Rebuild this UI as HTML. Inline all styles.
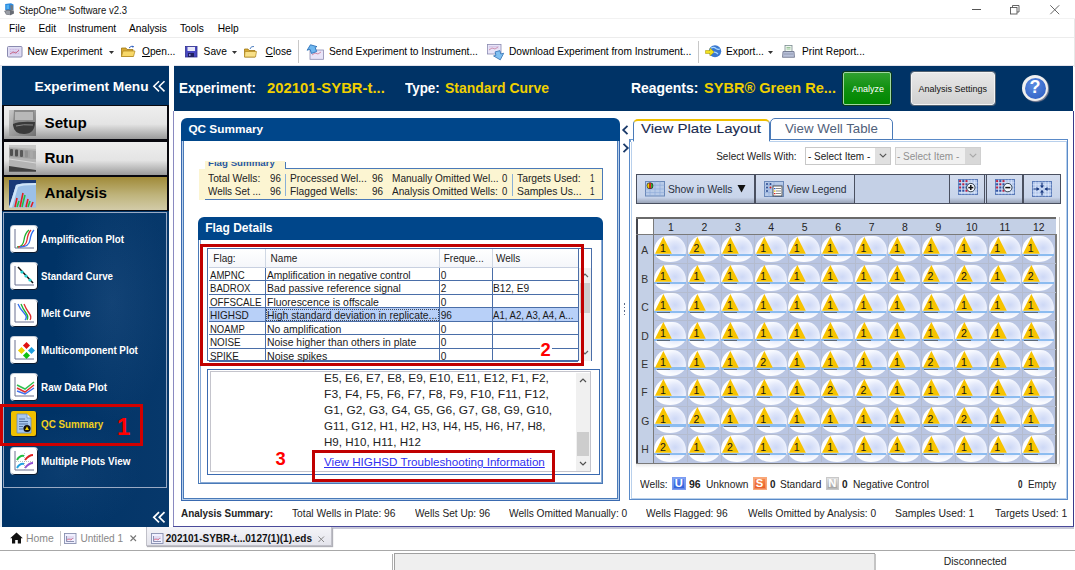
<!DOCTYPE html><html><head><meta charset="utf-8"><style>
*{margin:0;padding:0;box-sizing:border-box}
html,body{width:1075px;height:570px;overflow:hidden;background:#fff;font-family:"Liberation Sans",sans-serif;color:#000}
.abs{position:absolute}
.t{position:absolute;white-space:pre;line-height:1}
svg{position:absolute;overflow:visible}
.ib{position:absolute;width:26px;height:26px;background:#fff;border-radius:3px;box-shadow:1px 1px 0 #0a1a30, 0 0 0 1px #c8d0dc}
</style></head><body>
<svg style="left:4px;top:3px;" width="10.5" height="12.5" viewBox="0 0 10.5 12.5"><path d="M1.2 1 L7 0.2 L9.5 1.5 L9.5 7 L1.2 7Z" fill="#2a8ae0"/><path d="M2.5 2 L5 1.8 L5 6 L2.5 6Z" fill="#50b0f0"/><path d="M6.5 2 L9 2.5 L9 7 L6.5 7Z" fill="#707880"/><path d="M0.2 8 L4 6.5 L9.8 7.5 L10 10.5 L6.5 12.3 L2 11.5 Z" fill="#686c74"/><path d="M1 8.5 L4 7.5 L6 8 L6 12 L2.5 11Z" fill="#9a9ea6"/></svg>
<div class="t" style="left:19.2px;top:4.9px;font-size:10.6px;color:#111;font-weight:normal;transform:scaleX(0.8985);transform-origin:0 0;">StepOne™ Software v2.3</div>
<div class="abs" style="left:0px;top:18px;width:1075px;height:1px;background:#f2f2f2"></div>
<div class="abs" style="left:972px;top:9px;width:9px;height:1px;background:#555"></div>
<svg style="left:1010px;top:5px;" width="10" height="10" viewBox="0 0 10 10"><rect x="0.5" y="2.5" width="6.5" height="6.5" fill="none" stroke="#555" stroke-width="0.9"/><path d="M2.5 2.5 V0.5 H9 V7 H7" fill="none" stroke="#555" stroke-width="0.9"/></svg>
<svg style="left:1050px;top:5px;" width="9.5" height="9.5" viewBox="0 0 9.5 9.5"><path d="M0.3 0.3 L9.2 9.2 M9.2 0.3 L0.3 9.2" stroke="#555" stroke-width="0.9"/></svg>
<div class="t" style="left:9px;top:23.8px;font-size:10.2px;color:#000;font-weight:normal;">File</div>
<div class="t" style="left:38.5px;top:23.8px;font-size:10.2px;color:#000;font-weight:normal;">Edit</div>
<div class="t" style="left:68px;top:23.8px;font-size:10.2px;color:#000;font-weight:normal;">Instrument</div>
<div class="t" style="left:129px;top:23.8px;font-size:10.2px;color:#000;font-weight:normal;">Analysis</div>
<div class="t" style="left:180px;top:23.8px;font-size:10.2px;color:#000;font-weight:normal;">Tools</div>
<div class="t" style="left:217.7px;top:23.8px;font-size:10.2px;color:#000;font-weight:normal;">Help</div>
<div class="abs" style="left:0px;top:37px;width:1075px;height:1px;background:#ececec"></div>
<div class="t" style="left:27.6px;top:46.5px;font-size:10.2px;color:#000;font-weight:normal;">New Experiment</div>
<div class="t" style="left:142px;top:46.5px;font-size:10.2px;color:#000;font-weight:normal;"><u>O</u>pen...</div>
<div class="t" style="left:203.6px;top:46.5px;font-size:10.2px;color:#000;font-weight:normal;">Save</div>
<div class="t" style="left:265.6px;top:46.5px;font-size:10.2px;color:#000;font-weight:normal;"><u>C</u>lose</div>
<div class="t" style="left:329px;top:46.5px;font-size:10.2px;color:#000;font-weight:normal;">Send Experiment to Instrument...</div>
<div class="t" style="left:509px;top:46.5px;font-size:10.2px;color:#000;font-weight:normal;">Download Experiment from Instrument...</div>
<div class="t" style="left:726px;top:46.5px;font-size:10.2px;color:#000;font-weight:normal;">Export...</div>
<div class="t" style="left:802px;top:46.5px;font-size:10.2px;color:#000;font-weight:normal;">Print Report...</div>
<svg style="left:6.5px;top:46px;" width="15.5" height="11.5" viewBox="0 0 15.5 11.5"><rect x="0.5" y="0.5" width="14.5" height="10.5" rx="1" fill="#e0e0f4" stroke="#8a8ab0" stroke-width="1"/><rect x="2" y="2" width="11.5" height="7.5" fill="#dcd4f0"/><path d="M3 3.5 H12 M3 5.5H12 M3 7.5H12" stroke="#c0a8d8" stroke-width="0.6" stroke-dasharray="1 0.6"/><path d="M3 8 L6 6 L9 7 L12 4" stroke="#c04060" stroke-width="0.7" fill="none"/></svg>
<svg style="left:108.5px;top:50.5px;" width="5" height="3" viewBox="0 0 5 3"><path d="M0 0 H5 L2.5 3Z" fill="#333"/></svg>
<svg style="left:121px;top:44.5px;" width="14.5" height="12" viewBox="0 0 14.5 12"><path d="M0.5 3 H5 L6 4.5 H12 V11.5 H0.5Z" fill="#d8a830" stroke="#a07818" stroke-width="0.8"/><path d="M2 6 H14 L12.5 11.5 H0.5Z" fill="#f8d868" stroke="#b08820" stroke-width="0.7"/><path d="M8 3 Q10 0.5 12.5 1.5" stroke="#3060c0" stroke-width="1" fill="none"/><path d="M11.5 0.5 L13 1.7 L11.5 3" fill="#3060c0"/></svg>
<svg style="left:184.8px;top:45.8px;" width="12.5" height="11.5" viewBox="0 0 12.5 11.5"><rect x="0.5" y="0.5" width="11.5" height="10.5" fill="#4848c0" stroke="#303090" stroke-width="0.8"/><rect x="2.5" y="1" width="7.5" height="4" fill="#e8e8f8"/><rect x="3" y="7" width="6" height="4" fill="#202060"/><rect x="4" y="8" width="1.5" height="2" fill="#8888d0"/></svg>
<svg style="left:231.5px;top:50.5px;" width="5" height="3" viewBox="0 0 5 3"><path d="M0 0 H5 L2.5 3Z" fill="#333"/></svg>
<svg style="left:244px;top:44.5px;" width="13.5" height="12.5" viewBox="0 0 13.5 12.5"><path d="M0.5 4 H4 L5 5.5 H11 V12 H0.5Z" fill="#d8a830" stroke="#a07818" stroke-width="0.8"/><path d="M1 6.5 H12.5 L11.5 12 H0.5Z" fill="#f8e088" stroke="#b08820" stroke-width="0.7"/><path d="M6 4 Q7 0.8 10 1.5" stroke="#5080c0" stroke-width="1" fill="none"/></svg>
<div class="abs" style="left:298.3px;top:40px;width:1.2px;height:22.5px;background:#c8c8c8"></div>
<svg style="left:306px;top:43.6px;" width="18" height="15.8" viewBox="0 0 18 15.8"><rect x="4" y="6" width="13.5" height="9.3" fill="#e8e4f8" stroke="#8a8ab0" stroke-width="0.8"/><path d="M6 11 L9 9 L12 10 L15 8" stroke="#c05070" stroke-width="0.6" fill="none"/><path d="M6 0.5 L11.5 4.5 L9.5 4.5 L9.5 9 L4 9 L4 4.5 L1 4.5Z" transform="rotate(-20 6 5)" fill="#70b8f0" stroke="#2a70b8" stroke-width="0.8"/></svg>
<svg style="left:487px;top:43.5px;" width="18" height="16.5" viewBox="0 0 18 16.5"><rect x="0.5" y="0.5" width="13.5" height="9.5" fill="#e8e4f8" stroke="#8a8ab0" stroke-width="0.8"/><path d="M2 6 L5 4 L8 5 L11 3" stroke="#c05070" stroke-width="0.6" fill="none"/><path d="M2 2.5H12 M2 4H12" stroke="#c8b0d8" stroke-width="0.5"/><path d="M9 7 H14 V10.5 H17 L12 16 L6.5 10.5 H9Z" transform="rotate(-15 12 11)" fill="#80c0f0" stroke="#3a78b8" stroke-width="0.8"/></svg>
<div class="abs" style="left:698px;top:40.6px;width:1.2px;height:22px;background:#c8c8c8"></div>
<svg style="left:705px;top:45px;" width="16.5" height="12.5" viewBox="0 0 16.5 12.5"><ellipse cx="10" cy="6.2" rx="6.2" ry="6" fill="#3a78d0"/><path d="M6 3 Q9 1.5 11 3.5 Q13 5 15 4 M7 8 Q10 6 13 9" stroke="#a8d8ff" stroke-width="1.2" fill="none"/><path d="M0.5 5.5 H5 V3 L9 7 L5 11 V8.5 H0.5Z" fill="#f0e020" stroke="#b0a010" stroke-width="0.6"/></svg>
<svg style="left:767.5px;top:50.5px;" width="5" height="3" viewBox="0 0 5 3"><path d="M0 0 H5 L2.5 3Z" fill="#333"/></svg>
<svg style="left:781.5px;top:44.5px;" width="13" height="13" viewBox="0 0 13 13"><rect x="3" y="0.5" width="7" height="6" fill="#f0f8f0" stroke="#7a8a90" stroke-width="0.8"/><path d="M4.5 2.5H8.5 M4.5 4H8.5" stroke="#60a060" stroke-width="0.6"/><path d="M1 6.5 H12 L12.5 12.3 H0.5Z" fill="#b8c0d8" stroke="#6a7088" stroke-width="0.8"/><path d="M2 9H11" stroke="#8890a8" stroke-width="0.8"/></svg>
<div class="abs" style="left:0px;top:64.5px;width:169px;height:1px;background:#e4e4ec"></div>
<div class="abs" style="left:173.5px;top:64.5px;width:901px;height:1px;background:#e4e4ec"></div>
<div class="abs" style="left:1073.5px;top:19px;width:1.5px;height:48px;background:#e8e8e8"></div>
<div class="abs" style="left:0px;top:66px;width:2px;height:461px;background:#e8eef4"></div>
<div class="abs" style="left:2px;top:66px;width:167px;height:461px;background:#003366"></div>
<div class="abs" style="left:2px;top:105px;width:167px;height:106px;background:#08080e"></div>
<div class="abs" style="left:2px;top:212px;width:167px;height:315px;background:linear-gradient(90deg,rgba(0,0,0,0) 30%,rgba(40,80,130,0.18)),radial-gradient(ellipse 60px 120px at 110px 90px,rgba(90,130,180,0.18),rgba(0,0,0,0)),radial-gradient(ellipse 80px 60px at 60px 260px,rgba(90,130,180,0.12),rgba(0,0,0,0))"></div>
<div class="t" style="left:34.5px;top:79.5px;font-size:13.7px;color:#fff;font-weight:bold;">Experiment Menu</div>
<svg style="left:152px;top:80px;" width="14" height="13" viewBox="0 0 14 13"><path d="M7 1.2 L1.8 6.3 L7 11.4 M12.5 1.2 L7.3 6.3 L12.5 11.4" stroke="#fff" stroke-width="1.5" fill="none"/></svg>
<div class="abs" style="left:4px;top:106px;width:163px;height:33px;background:linear-gradient(#eeeeee,#e4e4e4 55%,#9a9a9a)"></div>
<div class="t" style="left:44.5px;top:114.7px;font-size:15.2px;color:#000;font-weight:bold;">Setup</div>
<div class="abs" style="left:4px;top:141.5px;width:163px;height:33px;background:linear-gradient(#eeeeee,#e4e4e4 55%,#9a9a9a)"></div>
<div class="t" style="left:44.5px;top:150.2px;font-size:15.2px;color:#000;font-weight:bold;">Run</div>
<div class="abs" style="left:4px;top:176.5px;width:163px;height:33px;background:linear-gradient(#a08a38,#bfb47c 55%,#d2cba8)"></div>
<div class="t" style="left:44.5px;top:185.2px;font-size:15.2px;color:#000;font-weight:bold;">Analysis</div>
<svg style="left:9px;top:109.5px;" width="27" height="26" viewBox="0 0 27 26"><defs><linearGradient id="sg" x1="0" y1="0" x2="1" y2="1"><stop offset="0" stop-color="#c8c8c8"/><stop offset="1" stop-color="#707070"/></linearGradient></defs><rect width="27" height="26" fill="url(#sg)"/><path d="M5 0 H25 L26 12 Q26 24 15 24 Q5 24 4 15Z" fill="#8a8a8a"/><path d="M6 2 H24 V10 H6Z" fill="#b8b8b8"/><path d="M4 14 Q10 11 26 12 Q26 24 15 24 Q5 24 4 15Z" fill="#3a3a3a"/><path d="M7 16 Q14 14 24 15" stroke="#888" stroke-width="1" fill="none"/></svg>
<svg style="left:9px;top:144.6px;" width="27" height="26.7" viewBox="0 0 27 26.7"><rect width="27" height="26.7" fill="#b4b4b4"/><path d="M0 0 H27 V4 L0 2Z" fill="#c8c8c8"/><path d="M0 3 L27 6 V14 L0 12Z" fill="#a0a0a0"/><rect x="1" y="4" width="3" height="7" rx="1" fill="#505050"/><rect x="6" y="4.5" width="3" height="7" rx="1" fill="#505050"/><rect x="11" y="5" width="3" height="7" rx="1" fill="#585858"/><rect x="16" y="5.5" width="3" height="7" rx="1" fill="#909090"/><rect x="21" y="6" width="3" height="7" rx="1" fill="#a8a8a8"/><path d="M0 14 L27 18" stroke="#d8d8d8" stroke-width="1"/><path d="M0 21 L27 25 V26.7 H0Z" fill="#404040"/></svg>
<svg style="left:9px;top:179.6px;" width="27" height="27.6" viewBox="0 0 27 27.6"><rect width="27" height="27.6" fill="#9cc0e8"/><path d="M0 0 H27 V3 Q10 3 7 5 L0 27.6Z" fill="#1a3a78"/><path d="M7 5 Q10 3 27 3 V5 Q12 5 9 7 L3 27.6 H0Z" fill="#d0e4f8"/><path d="M6 27 L8 18 M11 27 L14 13 M17 27 L19 19 M22 27 L24 22" stroke="#e02020" stroke-width="1.6"/><path d="M8 27 L10 21 M13 27 L16 15 M19 27 L21 21" stroke="#20c040" stroke-width="1.6"/></svg>
<div class="abs" style="left:3px;top:212px;width:164px;height:276px;border:1px solid #9aaac4"></div>
<div class="ib" style="left:10.5px;top:226.29999999999998px"></div>
<svg style="left:10.5px;top:226.29999999999998px;" width="26" height="26" viewBox="0 0 26 26"><path d="M4 3 V22 H23" stroke="#6a7090" fill="none"/><path d="M6 21 Q12 21 13 14 T18 4" stroke="#20b030" fill="none" stroke-width="1.3"/><path d="M7 21 Q15 21 16 14 T20 4" stroke="#e03030" fill="none" stroke-width="1.3"/><path d="M9 21 Q18 21 19 14 T23 4" stroke="#3070f0" fill="none" stroke-width="1.3"/></svg>
<div class="t" style="left:40.6px;top:235.2px;font-size:10.3px;color:#fff;font-weight:bold;transform:scaleX(0.9480);transform-origin:0 0;">Amplification Plot</div>
<div class="ib" style="left:10.5px;top:263.3px"></div>
<svg style="left:10.5px;top:263.3px;" width="26" height="26" viewBox="0 0 26 26"><path d="M4 3 V22 H23" stroke="#6a7090" fill="none"/><path d="M7 4 L22 20" stroke="#101010" stroke-width="1.5"/><circle cx="11" cy="9" r="1.6" fill="#20d0d0"/><circle cx="15" cy="13" r="1.6" fill="#20d0d0"/><circle cx="19" cy="17" r="1.6" fill="#20d0d0"/></svg>
<div class="t" style="left:41.4px;top:272.20000000000005px;font-size:10.3px;color:#fff;font-weight:bold;transform:scaleX(0.9388);transform-origin:0 0;">Standard Curve</div>
<div class="ib" style="left:10.5px;top:300.2px"></div>
<svg style="left:10.5px;top:300.2px;" width="26" height="26" viewBox="0 0 26 26"><path d="M4 3 V22 H23" stroke="#6a7090" fill="none"/><path d="M7 4 Q9 9 13 13 T14 20" stroke="#3070f0" fill="none" stroke-width="1.3"/><path d="M10 4 Q12 9 15 13 T16 20" stroke="#20b030" fill="none" stroke-width="1.3"/><path d="M13 4 Q15 9 18 13 T19 20" stroke="#e03030" fill="none" stroke-width="1.3"/></svg>
<div class="t" style="left:40.6px;top:309.1px;font-size:10.3px;color:#fff;font-weight:bold;transform:scaleX(0.9381);transform-origin:0 0;">Melt Curve</div>
<div class="ib" style="left:10.5px;top:337.2px"></div>
<svg style="left:10.5px;top:337.2px;" width="26" height="26" viewBox="0 0 26 26"><path d="M4 3 V22 H23" stroke="#6a7090" fill="none"/><rect x="13" y="6" width="5" height="5" transform="rotate(45 15.5 8.5)" fill="#e01010"/><rect x="8" y="11" width="5" height="5" transform="rotate(45 10.5 13.5)" fill="#f0d000"/><rect x="18" y="11" width="5" height="5" transform="rotate(45 20.5 13.5)" fill="#20a0e0"/><rect x="13" y="16" width="5" height="5" transform="rotate(45 15.5 18.5)" fill="#10c010"/></svg>
<div class="t" style="left:40.6px;top:346.1px;font-size:10.3px;color:#fff;font-weight:bold;transform:scaleX(0.9515);transform-origin:0 0;">Multicomponent Plot</div>
<div class="ib" style="left:10.5px;top:373.9px"></div>
<svg style="left:10.5px;top:373.9px;" width="26" height="26" viewBox="0 0 26 26"><path d="M4 3 V22 H23" stroke="#6a7090" fill="none"/><path d="M6 11 L14 15 L23 8" stroke="#30c050" fill="none" stroke-width="1.5"/><path d="M6 14 L14 18 L23 11" stroke="#e03030" fill="none" stroke-width="1.5"/><path d="M6 17 L14 20 L23 14" stroke="#4070f0" fill="none" stroke-width="1.5"/></svg>
<div class="t" style="left:40.6px;top:382.8px;font-size:10.3px;color:#fff;font-weight:bold;transform:scaleX(0.9624);transform-origin:0 0;">Raw Data Plot</div>
<div class="abs" style="left:11px;top:410.7px;width:25px;height:25px;background:#f0c000;border-radius:2px;box-shadow:1px 1px 0 #0a1a30"></div>
<svg style="left:11px;top:410.7px;" width="25" height="25" viewBox="0 0 25 25"><path d="M6 3 H16 L20 7 V22 H6Z" fill="#a8c8f0" stroke="#6a8ab8" stroke-width="0.8"/><path d="M16 3 V7 H20" fill="#e8f0f8" stroke="#6a8ab8" stroke-width="0.8"/><path d="M8 8 H14 M8 10.5 H17 M8 13 H17 M8 15.5 H12 M8 18 H12" stroke="#4a6a98" stroke-width="0.9"/><circle cx="16" cy="17.5" r="3.6" fill="#111"/><path d="M16 15.3 L18 19 H14Z" fill="#f0d000"/></svg>
<div class="t" style="left:40.6px;top:419.6px;font-size:10.3px;color:#f0d020;font-weight:bold;transform:scaleX(0.9547);transform-origin:0 0;">QC Summary</div>
<div class="ib" style="left:10.5px;top:447.9px"></div>
<svg style="left:10.5px;top:447.9px;" width="26" height="26" viewBox="0 0 26 26"><path d="M4 3 V22 H23" stroke="#6a7090" fill="none"/><path d="M6 12 Q9 7 13 8" stroke="#20c040" stroke-width="2" fill="none"/><path d="M14 12 Q18 7 22 7" stroke="#e02020" stroke-width="2" fill="none"/><path d="M6 20 Q9 15 13 16" stroke="#20a0e0" stroke-width="2" fill="none"/><path d="M14 20 Q18 15 22 15" stroke="#9050d0" stroke-width="2" fill="none"/><path d="M5 13.5 H23 M13.5 5 V22" stroke="#9aa" stroke-dasharray="1 1" stroke-width="0.7"/></svg>
<div class="t" style="left:40.6px;top:456.8px;font-size:10.3px;color:#fff;font-weight:bold;transform:scaleX(0.9603);transform-origin:0 0;">Multiple Plots View</div>
<div class="abs" style="left:0px;top:403.7px;width:143px;height:42.8px;border:3.4px solid #d00000"></div>
<div class="t" style="left:116.8px;top:414.6px;font-size:24.3px;color:#ff0000;font-weight:bold;font-family:"Liberation Serif",serif">1</div>
<svg style="left:152px;top:511px;" width="14" height="13" viewBox="0 0 14 13"><path d="M7 1.2 L1.8 6.3 L7 11.4 M12.5 1.2 L7.3 6.3 L12.5 11.4" stroke="#fff" stroke-width="1.7" fill="none"/></svg>
<div class="abs" style="left:174px;top:66px;width:899px;height:45px;background:#003366"></div>
<div class="abs" style="left:173px;top:111px;width:1px;height:416px;background:#8a8ac0"></div>
<div class="abs" style="left:1073px;top:111px;width:1px;height:416px;background:#3a3a8a"></div>
<div class="abs" style="left:173px;top:526px;width:901px;height:1px;background:#4a4a9a"></div>
<div class="abs" style="left:173px;top:527px;width:901px;height:2px;background:#c8c8d8"></div>
<div class="t" style="left:179.2px;top:81.2px;font-size:14.6px;color:#fff;font-weight:bold;transform:scaleX(0.9126);transform-origin:0 0;">Experiment:</div>
<div class="t" style="left:267.2px;top:81.2px;font-size:14.6px;color:#f0d000;font-weight:bold;transform:scaleX(1.0152);transform-origin:0 0;">202101-SYBR-t...</div>
<div class="t" style="left:405.3px;top:81.2px;font-size:14.6px;color:#fff;font-weight:bold;transform:scaleX(0.9193);transform-origin:0 0;">Type:</div>
<div class="t" style="left:445.3px;top:81.2px;font-size:14.6px;color:#f0d000;font-weight:bold;transform:scaleX(0.9566);transform-origin:0 0;">Standard Curve</div>
<div class="t" style="left:630.7px;top:81.2px;font-size:14.6px;color:#fff;font-weight:bold;transform:scaleX(0.9549);transform-origin:0 0;">Reagents:</div>
<div class="t" style="left:704.1px;top:81.2px;font-size:14.6px;color:#f0d000;font-weight:bold;transform:scaleX(0.9965);transform-origin:0 0;">SYBR® Green Re...</div>
<div class="abs" style="left:843px;top:71.5px;width:48px;height:33px;background:linear-gradient(#30a030,#109010 50%,#008800);border:1px solid #a0d8a0;border-radius:2px;box-shadow:0 0 0 1px #0a3a1a"></div>
<div class="t" style="left:852px;top:84.8px;font-size:9px;color:#fff;font-weight:normal;">Analyze</div>
<div class="abs" style="left:910.5px;top:71.5px;width:84px;height:33px;background:linear-gradient(#e8e8e8,#d0d0d0);border:1px solid #f4f4f4;border-radius:3px;box-shadow:0 0 0 1px #506070"></div>
<div class="t" style="left:918.5px;top:84.8px;font-size:9px;color:#111;font-weight:normal;">Analysis Settings</div>
<div class="abs" style="left:1022px;top:75px;width:26px;height:26px;border-radius:50%;background:#f0f0f0;box-shadow:1px 1px 1px #889"></div>
<div class="abs" style="left:1024.5px;top:77.5px;width:21px;height:21px;border-radius:50%;background:radial-gradient(circle at 40% 35%,#5a8ae0,#2a5ac0)"></div>
<div class="t" style="left:1029.5px;top:78px;font-size:18px;color:#fff;font-weight:bold;">?</div>
<div class="abs" style="left:181px;top:118px;width:439px;height:23px;background:#00468a;border-radius:6px 6px 0 0"></div>
<div class="t" style="left:188.4px;top:124px;font-size:11.8px;color:#fff;font-weight:bold;">QC Summary</div>
<div class="abs" style="left:181px;top:141px;width:439px;height:360px;border:1.3px solid #3a6ab0;border-top:none"></div>
<div class="abs" style="left:182.3px;top:141px;width:436.4px;height:358.7px;border:1px solid #b8d0ec;border-top:none"></div>
<div class="abs" style="left:183.3px;top:141px;width:434.4px;height:357.7px;border:1px solid #4a7ab8;border-top:none"></div>
<div class="abs" style="left:204.8px;top:161px;width:80px;height:9px;background:#fcf5d2"></div>
<div class="abs" style="left:199px;top:169px;width:404px;height:30.5px;background:#fcf5d2"></div>
<div class="abs" style="left:284.5px;top:162px;width:1px;height:7px;background:#4a7ab8"></div>
<div class="abs" style="left:285px;top:168px;width:318px;height:1px;background:#4a7ab8"></div>
<div class="abs" style="left:602px;top:168px;width:1px;height:31px;background:#4a7ab8"></div>
<div class="abs" style="left:204.8px;top:199px;width:398px;height:1.2px;background:#4a7ab8"></div>
<div class="abs" style="left:204.8px;top:162px;width:80px;height:7px;overflow:hidden"><div class="t" style="left:3.6px;top:-4.0px;font-size:9.8px;font-weight:bold;color:#2858a0;transform:scaleX(0.99);transform-origin:0 0">Flag Summary</div></div>
<div class="abs" style="left:285px;top:173.5px;width:1.2px;height:22px;background:#8ab0d8"></div>
<div class="abs" style="left:511.8px;top:173.5px;width:1.2px;height:22px;background:#8ab0d8"></div>
<div class="t" style="left:207.5px;top:173.9px;font-size:10.3px;color:#222;font-weight:normal;transform:scaleX(0.9967);transform-origin:0 0;">Total Wells:</div>
<div class="t" style="left:269.7px;top:173.9px;font-size:10.3px;color:#222;font-weight:normal;transform:scaleX(0.9427);transform-origin:0 0;">96</div>
<div class="t" style="left:290.4px;top:173.9px;font-size:10.3px;color:#222;font-weight:normal;transform:scaleX(0.9889);transform-origin:0 0;">Processed Wel...</div>
<div class="t" style="left:371.8px;top:173.9px;font-size:10.3px;color:#222;font-weight:normal;transform:scaleX(0.9601);transform-origin:0 0;">96</div>
<div class="t" style="left:391.7px;top:173.9px;font-size:10.3px;color:#222;font-weight:normal;transform:scaleX(0.9767);transform-origin:0 0;">Manually Omitted Wel...</div>
<div class="t" style="left:501.8px;top:173.9px;font-size:10.3px;color:#222;font-weight:normal;transform:scaleX(0.9252);transform-origin:0 0;">0</div>
<div class="t" style="left:517.2px;top:173.9px;font-size:10.3px;color:#222;font-weight:normal;transform:scaleX(1.0024);transform-origin:0 0;">Targets Used:</div>
<div class="t" style="left:589.5px;top:173.9px;font-size:10.3px;color:#222;font-weight:normal;transform:scaleX(0.7856);transform-origin:0 0;">1</div>
<div class="t" style="left:207.5px;top:186.9px;font-size:10.3px;color:#222;font-weight:normal;transform:scaleX(0.9642);transform-origin:0 0;">Wells Set ...</div>
<div class="t" style="left:269.7px;top:186.9px;font-size:10.3px;color:#222;font-weight:normal;transform:scaleX(0.9427);transform-origin:0 0;">96</div>
<div class="t" style="left:290.4px;top:186.9px;font-size:10.3px;color:#222;font-weight:normal;transform:scaleX(0.9965);transform-origin:0 0;">Flagged Wells:</div>
<div class="t" style="left:371.8px;top:186.9px;font-size:10.3px;color:#222;font-weight:normal;transform:scaleX(0.9601);transform-origin:0 0;">96</div>
<div class="t" style="left:391.7px;top:186.9px;font-size:10.3px;color:#222;font-weight:normal;transform:scaleX(0.9797);transform-origin:0 0;">Analysis Omitted Wells:</div>
<div class="t" style="left:501.8px;top:186.9px;font-size:10.3px;color:#222;font-weight:normal;transform:scaleX(0.9252);transform-origin:0 0;">0</div>
<div class="t" style="left:517.2px;top:186.9px;font-size:10.3px;color:#222;font-weight:normal;transform:scaleX(1.0077);transform-origin:0 0;">Samples Us...</div>
<div class="t" style="left:589.5px;top:186.9px;font-size:10.3px;color:#222;font-weight:normal;transform:scaleX(0.7856);transform-origin:0 0;">1</div>
<div class="abs" style="left:198px;top:217px;width:405px;height:23px;background:#00468a;border-radius:6px 6px 0 0"></div>
<div class="t" style="left:205.2px;top:222px;font-size:12px;color:#fff;font-weight:bold;">Flag Details</div>
<div class="abs" style="left:198px;top:240px;width:405px;height:244.4px;border:1.5px solid #4a7ab8;border-top:none"></div>
<div class="abs" style="left:199.5px;top:240px;width:402px;height:242.9px;border:1.5px solid #8aaad4;border-top:none"></div>
<div class="abs" style="left:207.3px;top:248.3px;width:385.2px;height:113px;border:1.5px solid #4a6ea8;background:#fff"></div>
<div class="abs" style="left:208.5px;top:249.3px;width:369px;height:18.3px;background:linear-gradient(#ffffff,#f4f6fa)"></div>
<div class="abs" style="left:208.5px;top:267.3px;width:369px;height:1px;background:#c8d0e0"></div>
<div class="abs" style="left:265px;top:249.3px;width:1px;height:18px;background:#d0d8e4"></div>
<div class="abs" style="left:438.7px;top:249.3px;width:1px;height:18px;background:#d0d8e4"></div>
<div class="abs" style="left:491.6px;top:249.3px;width:1px;height:18px;background:#d0d8e4"></div>
<div class="abs" style="left:577.7px;top:249.3px;width:1px;height:111px;background:#4a6ea8"></div>
<div class="t" style="left:213.3px;top:254.2px;font-size:10px;color:#222;font-weight:normal;">Flag:</div>
<div class="t" style="left:270.6px;top:254.2px;font-size:10px;color:#222;font-weight:normal;">Name</div>
<div class="t" style="left:443.7px;top:254.2px;font-size:10px;color:#222;font-weight:normal;">Freque...</div>
<div class="t" style="left:496px;top:254.2px;font-size:10px;color:#222;font-weight:normal;">Wells</div>
<div class="abs" style="left:208.5px;top:280.25px;width:369px;height:1px;background:#4a6ea8"></div>
<div class="t" style="left:209.6px;top:270.8px;font-size:10.1px;color:#1a1a1a;font-weight:normal;transform:scaleX(0.9486);transform-origin:0 0;">AMPNC</div>
<div class="t" style="left:266.7px;top:270.8px;font-size:10.1px;color:#1a1a1a;font-weight:normal;transform:scaleX(1.0117);transform-origin:0 0;">Amplification in negative control</div>
<div class="t" style="left:440.7px;top:270.8px;font-size:10.1px;color:#1a1a1a;font-weight:normal;">0</div>
<div class="abs" style="left:208.5px;top:293.7px;width:369px;height:1px;background:#4a6ea8"></div>
<div class="t" style="left:209.6px;top:284.25px;font-size:10.1px;color:#1a1a1a;font-weight:normal;transform:scaleX(0.9495);transform-origin:0 0;">BADROX</div>
<div class="t" style="left:266.7px;top:284.25px;font-size:10.1px;color:#1a1a1a;font-weight:normal;transform:scaleX(1.0332);transform-origin:0 0;">Bad passive reference signal</div>
<div class="t" style="left:440.7px;top:284.25px;font-size:10.1px;color:#1a1a1a;font-weight:normal;">2</div>
<div class="t" style="left:493px;top:284.25px;font-size:10.1px;color:#1a1a1a;font-weight:normal;transform:scaleX(1.0073);transform-origin:0 0;">B12, E9</div>
<div class="abs" style="left:208.5px;top:307.15px;width:369px;height:1px;background:#4a6ea8"></div>
<div class="t" style="left:209.6px;top:297.7px;font-size:10.1px;color:#1a1a1a;font-weight:normal;transform:scaleX(0.9678);transform-origin:0 0;">OFFSCALE</div>
<div class="t" style="left:266.7px;top:297.7px;font-size:10.1px;color:#1a1a1a;font-weight:normal;transform:scaleX(1.0355);transform-origin:0 0;">Fluorescence is offscale</div>
<div class="t" style="left:440.7px;top:297.7px;font-size:10.1px;color:#1a1a1a;font-weight:normal;">0</div>
<div class="abs" style="left:208.5px;top:308.15px;width:369px;height:13.45px;background:#b8d0f8"></div>
<div class="abs" style="left:266px;top:308.65px;width:172.5px;height:12.5px;border:1px dotted #404858"></div>
<div class="abs" style="left:208.5px;top:320.59999999999997px;width:369px;height:1px;background:#4a6ea8"></div>
<div class="t" style="left:209.6px;top:311.15px;font-size:10.1px;color:#1a1a1a;font-weight:normal;transform:scaleX(0.9878);transform-origin:0 0;">HIGHSD</div>
<div class="t" style="left:266.7px;top:311.15px;font-size:10.1px;color:#1a1a1a;font-weight:normal;transform:scaleX(1.0247);transform-origin:0 0;">High standard deviation in replicate...</div>
<div class="t" style="left:440.7px;top:311.15px;font-size:10.1px;color:#1a1a1a;font-weight:normal;">96</div>
<div class="t" style="left:493px;top:311.15px;font-size:10.1px;color:#1a1a1a;font-weight:normal;transform:scaleX(0.9482);transform-origin:0 0;">A1, A2, A3, A4, A...</div>
<div class="abs" style="left:208.5px;top:334.05px;width:369px;height:1px;background:#4a6ea8"></div>
<div class="t" style="left:209.6px;top:324.6px;font-size:10.1px;color:#1a1a1a;font-weight:normal;transform:scaleX(0.9396);transform-origin:0 0;">NOAMP</div>
<div class="t" style="left:266.7px;top:324.6px;font-size:10.1px;color:#1a1a1a;font-weight:normal;transform:scaleX(1.0354);transform-origin:0 0;">No amplification</div>
<div class="t" style="left:440.7px;top:324.6px;font-size:10.1px;color:#1a1a1a;font-weight:normal;">0</div>
<div class="abs" style="left:208.5px;top:347.5px;width:369px;height:1px;background:#4a6ea8"></div>
<div class="t" style="left:209.6px;top:338.05px;font-size:10.1px;color:#1a1a1a;font-weight:normal;transform:scaleX(0.9768);transform-origin:0 0;">NOISE</div>
<div class="t" style="left:266.7px;top:338.05px;font-size:10.1px;color:#1a1a1a;font-weight:normal;transform:scaleX(1.0267);transform-origin:0 0;">Noise higher than others in plate</div>
<div class="t" style="left:440.7px;top:338.05px;font-size:10.1px;color:#1a1a1a;font-weight:normal;">0</div>
<div class="abs" style="left:208.5px;top:360.95px;width:369px;height:1px;background:#4a6ea8"></div>
<div class="t" style="left:209.6px;top:351.5px;font-size:10.1px;color:#1a1a1a;font-weight:normal;transform:scaleX(0.9713);transform-origin:0 0;">SPIKE</div>
<div class="t" style="left:266.7px;top:351.5px;font-size:10.1px;color:#1a1a1a;font-weight:normal;transform:scaleX(1.0549);transform-origin:0 0;">Noise spikes</div>
<div class="t" style="left:440.7px;top:351.5px;font-size:10.1px;color:#1a1a1a;font-weight:normal;">0</div>
<div class="abs" style="left:265px;top:267.8px;width:1px;height:93px;background:#4a6ea8"></div>
<div class="abs" style="left:438.7px;top:267.8px;width:1px;height:93px;background:#4a6ea8"></div>
<div class="abs" style="left:491.6px;top:267.8px;width:1px;height:93px;background:#4a6ea8"></div>
<div class="abs" style="left:578.7px;top:267.8px;width:12.8px;height:93px;background:#f0f0f0"></div>
<div class="abs" style="left:580px;top:283px;width:10px;height:29.5px;background:#cdcdcd"></div>
<svg style="left:581px;top:272px;" width="8" height="6" viewBox="0 0 8 6"><path d="M1 5 L4 2 L7 5" stroke="#606060" fill="none" stroke-width="1.2"/></svg>
<svg style="left:581px;top:350px;" width="8" height="6" viewBox="0 0 8 6"><path d="M1 1 L4 4 L7 1" stroke="#606060" fill="none" stroke-width="1.2"/></svg>
<div class="abs" style="left:200px;top:244.4px;width:383.8px;height:122px;border:3.3px solid #c00000"></div>
<div class="abs" style="left:540px;top:342.5px;width:12px;height:15px;background:#fff"></div>
<div class="t" style="left:540.5px;top:340.7px;font-size:18.4px;color:#ff0000;font-weight:bold;">2</div>
<div class="abs" style="left:207.2px;top:368.6px;width:393.2px;height:106.4px;border:1.2px solid #3a6ab0"></div>
<div class="abs" style="left:210px;top:371.3px;width:381px;height:100.6px;border:1px solid #c4c4cc"></div>
<div class="t" style="left:324px;top:373.4px;font-size:11.2px;color:#222;font-weight:normal;transform:scaleX(1.0582);transform-origin:0 0;">E5, E6, E7, E8, E9, E10, E11, E12, F1, F2,</div>
<div class="t" style="left:324px;top:389.4px;font-size:11.2px;color:#222;font-weight:normal;transform:scaleX(1.0839);transform-origin:0 0;">F3, F4, F5, F6, F7, F8, F9, F10, F11, F12,</div>
<div class="t" style="left:324px;top:405.4px;font-size:11.2px;color:#222;font-weight:normal;transform:scaleX(1.0631);transform-origin:0 0;">G1, G2, G3, G4, G5, G6, G7, G8, G9, G10,</div>
<div class="t" style="left:324px;top:421.4px;font-size:11.2px;color:#222;font-weight:normal;transform:scaleX(1.0304);transform-origin:0 0;">G11, G12, H1, H2, H3, H4, H5, H6, H7, H8,</div>
<div class="t" style="left:324px;top:437.4px;font-size:11.2px;color:#222;font-weight:normal;transform:scaleX(1.0342);transform-origin:0 0;">H9, H10, H11, H12</div>
<div class="t" style="left:324px;top:456.8px;font-size:11.4px;color:#3030f0;font-weight:normal;transform:scaleX(1.0208);transform-origin:0 0;text-decoration:underline">View HIGHSD Troubleshooting Information</div>
<div class="abs" style="left:575.8px;top:372.8px;width:14.2px;height:97.8px;background:#f0f0f0"></div>
<div class="abs" style="left:577px;top:432px;width:12px;height:23.8px;background:#cdcdcd"></div>
<svg style="left:579px;top:377px;" width="8" height="6" viewBox="0 0 8 6"><path d="M1 5 L4 2 L7 5" stroke="#505050" fill="none" stroke-width="1.2"/></svg>
<svg style="left:579px;top:461px;" width="8" height="6" viewBox="0 0 8 6"><path d="M1 1 L4 4 L7 1" stroke="#505050" fill="none" stroke-width="1.2"/></svg>
<div class="abs" style="left:311.6px;top:449.7px;width:243.9px;height:32.3px;border:3.3px solid #c00000"></div>
<div class="t" style="left:275.6px;top:449.6px;font-size:18.4px;color:#ff0000;font-weight:bold;">3</div>
<svg style="left:621.5px;top:125px;" width="7" height="10" viewBox="0 0 7 10"><path d="M5.5 0.8 L1.2 5 L5.5 9.2" stroke="#1a3a6a" stroke-width="1.8" fill="none"/></svg>
<svg style="left:621.5px;top:142.5px;" width="7" height="10" viewBox="0 0 7 10"><path d="M1.5 0.8 L5.8 5 L1.5 9.2" stroke="#1a3a6a" stroke-width="1.8" fill="none"/></svg>
<div class="abs" style="left:623.6px;top:303.2px;width:1.5px;height:1.5px;background:#5a6a88"></div>
<div class="abs" style="left:623.6px;top:306.9px;width:1.5px;height:1.5px;background:#5a6a88"></div>
<div class="abs" style="left:623.6px;top:310.4px;width:1.5px;height:1.5px;background:#5a6a88"></div>
<div class="abs" style="left:623.6px;top:313.8px;width:1.5px;height:1.5px;background:#5a6a88"></div>
<div class="abs" style="left:629px;top:139px;width:439px;height:361.3px;border:1.5px solid #5a8ac8"></div>
<div class="abs" style="left:630.5px;top:140.5px;width:436px;height:358.3px;border:1.2px solid #b8d0ec"></div>
<div class="abs" style="left:632.5px;top:118.5px;width:137px;height:22px;background:#fff;border:1px solid #4a7ab8;border-bottom:none;border-top:2px solid #f0c000;border-radius:5px 5px 0 0"></div>
<div class="abs" style="left:630px;top:138.5px;width:3px;height:3px;background:#fff;border-left:1px solid #6a9ad0;border-top:1px solid #6a9ad0"></div>
<div class="abs" style="left:633.5px;top:139px;width:135px;height:3px;background:#fff"></div>
<div class="abs" style="left:769.5px;top:118.3px;width:123.5px;height:21.5px;background:#fff;border:1px solid #4a7ab8;border-bottom:1px solid #4a7ab8;border-radius:5px 5px 0 0"></div>
<div class="t" style="left:641.3px;top:121.8px;font-size:13.6px;color:#1a2c50;font-weight:normal;transform:scaleX(1.1048);transform-origin:0 0;-webkit-text-stroke:0.1px #1a2c50">View Plate Layout</div>
<div class="t" style="left:784.5px;top:121.8px;font-size:13.6px;color:#50607a;font-weight:normal;transform:scaleX(0.9763);transform-origin:0 0;">View Well Table</div>
<div class="t" style="left:716.2px;top:151.6px;font-size:10px;color:#222;font-weight:normal;">Select Wells With:</div>
<div class="abs" style="left:805px;top:146.5px;width:86px;height:18.5px;background:#fff;border:1px solid #c8c8c8"></div>
<div class="abs" style="left:875px;top:147.5px;width:15px;height:16.5px;background:#e0e0e0"></div>
<div class="t" style="left:808px;top:151.6px;font-size:10px;color:#222;font-weight:normal;">- Select Item -</div>
<svg style="left:878.5px;top:153px;" width="8" height="5" viewBox="0 0 8 5"><path d="M0.8 0.8 L4 4 L7.2 0.8" stroke="#555" fill="none" stroke-width="1.1"/></svg>
<div class="abs" style="left:894.5px;top:146.5px;width:86px;height:18.5px;background:#f0f0f0;border:1px solid #d0d0d0"></div>
<div class="abs" style="left:965.3px;top:147.5px;width:14.5px;height:16.5px;background:#d8d8d8"></div>
<div class="t" style="left:897px;top:151.6px;font-size:10px;color:#909090;font-weight:normal;">- Select Item -</div>
<svg style="left:968.5px;top:153px;" width="8" height="5" viewBox="0 0 8 5"><path d="M0.8 0.8 L4 4 L7.2 0.8" stroke="#a8a8a8" fill="none" stroke-width="1.1"/></svg>
<div class="abs" style="left:636px;top:173.5px;width:425px;height:30.3px;background:#c4d0e6;border:1.5px solid #4a5060"></div>
<div class="abs" style="left:636px;top:173.5px;width:119px;height:30.3px;background:linear-gradient(#d4ddee,#c8d4ea 80%,#9aa4b8);border:1.5px solid #4a5060"></div>
<div class="abs" style="left:755px;top:173.5px;width:99.5px;height:30.3px;background:linear-gradient(#d4ddee,#c8d4ea 80%,#9aa4b8);border:1.5px solid #4a5060"></div>
<div class="abs" style="left:949.3px;top:173.5px;width:36.200000000000045px;height:30.3px;background:linear-gradient(#d4ddee,#c8d4ea 80%,#9aa4b8);border:1.5px solid #4a5060"></div>
<div class="abs" style="left:985.5px;top:173.5px;width:37.5px;height:30.3px;background:linear-gradient(#d4ddee,#c8d4ea 80%,#9aa4b8);border:1.5px solid #4a5060"></div>
<div class="abs" style="left:1023px;top:173.5px;width:37.59999999999991px;height:30.3px;background:linear-gradient(#d4ddee,#c8d4ea 80%,#9aa4b8);border:1.5px solid #4a5060"></div>
<svg style="left:645.3px;top:181px;" width="20" height="15.5" viewBox="0 0 20 15.5"><rect x="0.5" y="0.5" width="19" height="14.5" fill="#b8cbe8" stroke="#6a88b8" stroke-width="1"/><path d="M5 0.5V15 M10 0.5V15 M15 0.5V15 M0.5 4.2H19.5 M0.5 8H19.5 M0.5 11.6H19.5" stroke="#8aa8d8" stroke-width="0.6"/><defs><clipPath id="cc"><circle cx="5" cy="4.8" r="2.7"/></clipPath></defs><circle cx="5" cy="4.8" r="3.3" fill="#222"/><g clip-path="url(#cc)"><rect x="2" y="2" width="2.4" height="6" fill="#f0d000"/><rect x="4.4" y="2" width="1.6" height="6" fill="#e02020"/><rect x="6" y="2" width="2.4" height="6" fill="#30b030"/></g></svg>
<div class="t" style="left:668.4px;top:183.9px;font-size:11.2px;color:#2a3040;font-weight:normal;transform:scaleX(0.9211);transform-origin:0 0;">Show in Wells</div>
<svg style="left:736.5px;top:184.3px;" width="9" height="9" viewBox="0 0 9 9"><path d="M0.5 1 H8.5 L4.5 8.5Z" fill="#111"/></svg>
<svg style="left:763.6px;top:180.8px;" width="20" height="16" viewBox="0 0 20 16"><rect x="0.5" y="0.5" width="19" height="15" fill="#b8cbe8" stroke="#6a88b8" stroke-width="1"/><path d="M0.5 4.2H19.5 M0.5 8H19.5 M0.5 11.6H19.5 M5 0.5V16 M10 0.5V16" stroke="#8aa8d8" stroke-width="0.6"/><circle cx="3" cy="3" r="1" fill="#2a4a90"/><circle cx="6.5" cy="3" r="1" fill="#2a4a90"/><circle cx="3" cy="6.5" r="1" fill="#2a4a90"/><circle cx="6.5" cy="6.5" r="1" fill="#d02020"/><circle cx="3" cy="10" r="1" fill="#2a4a90"/><rect x="9" y="5" width="9" height="10" fill="#fff" stroke="#333" stroke-width="0.8"/><path d="M12 7.5H17 M12 10H17 M12 12.5H17" stroke="#555" stroke-width="0.7"/><rect x="10" y="7" width="1.5" height="1.2" fill="#2060d0"/><rect x="10" y="9.5" width="1.5" height="1.2" fill="#e0c000"/><rect x="10" y="12" width="1.5" height="1.2" fill="#e02020"/></svg>
<div class="t" style="left:786.5px;top:183.9px;font-size:11.2px;color:#2a3040;font-weight:normal;transform:scaleX(0.9216);transform-origin:0 0;">View Legend</div>
<svg style="left:958.3px;top:179.3px;" width="20" height="16" viewBox="0 0 20 16"><rect x="0.5" y="0.5" width="19" height="15" fill="#b4c8ec" stroke="#5a7ab8" stroke-width="1"/><path d="M0.5 3.7H19.5 M0.5 6.9H19.5 M0.5 10.1H19.5 M0.5 13.3H19.5 M3.7 0.5V15.5 M6.9 0.5V15.5 M10.1 0.5V15.5 M13.3 0.5V15.5 M16.5 0.5V15.5" stroke="#e8f0ff" stroke-width="0.5"/><rect x="1.1" y="1.1" width="2" height="2" fill="#c02040"/><rect x="1.1" y="4.3" width="2" height="2" fill="#3050a0"/><rect x="1.1" y="7.5" width="2" height="2" fill="#c02040"/><rect x="1.1" y="10.7" width="2" height="2" fill="#3050a0"/><rect x="4.3" y="1.1" width="2" height="2" fill="#3050a0"/><rect x="4.3" y="4.3" width="2" height="2" fill="#c02040"/><rect x="4.3" y="7.5" width="2" height="2" fill="#3050a0"/><rect x="4.3" y="10.7" width="2" height="2" fill="#3050a0"/><rect x="7.5" y="1.1" width="2" height="2" fill="#c02040"/><rect x="7.5" y="4.3" width="2" height="2" fill="#3050a0"/><rect x="7.5" y="7.5" width="2" height="2" fill="#3050a0"/><rect x="7.5" y="10.7" width="2" height="2" fill="#c02040"/><circle cx="12.8" cy="8.6" r="4.2" fill="#f4f8ff" stroke="#203040" stroke-width="0.9"/><path d="M10.3 8.6H15.3" stroke="#111" stroke-width="1.5"/><path d="M12.8 6.1V11.1" stroke="#111" stroke-width="1.5"/></svg>
<svg style="left:995px;top:179.3px;" width="20" height="16" viewBox="0 0 20 16"><rect x="0.5" y="0.5" width="19" height="15" fill="#b4c8ec" stroke="#5a7ab8" stroke-width="1"/><path d="M0.5 3.7H19.5 M0.5 6.9H19.5 M0.5 10.1H19.5 M0.5 13.3H19.5 M3.7 0.5V15.5 M6.9 0.5V15.5 M10.1 0.5V15.5 M13.3 0.5V15.5 M16.5 0.5V15.5" stroke="#e8f0ff" stroke-width="0.5"/><rect x="1.1" y="1.1" width="2" height="2" fill="#c02040"/><rect x="1.1" y="4.3" width="2" height="2" fill="#3050a0"/><rect x="1.1" y="7.5" width="2" height="2" fill="#c02040"/><rect x="1.1" y="10.7" width="2" height="2" fill="#3050a0"/><rect x="4.3" y="1.1" width="2" height="2" fill="#3050a0"/><rect x="4.3" y="4.3" width="2" height="2" fill="#c02040"/><rect x="4.3" y="7.5" width="2" height="2" fill="#3050a0"/><rect x="4.3" y="10.7" width="2" height="2" fill="#3050a0"/><rect x="7.5" y="1.1" width="2" height="2" fill="#c02040"/><rect x="7.5" y="4.3" width="2" height="2" fill="#3050a0"/><rect x="7.5" y="7.5" width="2" height="2" fill="#3050a0"/><rect x="7.5" y="10.7" width="2" height="2" fill="#c02040"/><circle cx="12.8" cy="8.6" r="4.2" fill="#f4f8ff" stroke="#203040" stroke-width="0.9"/><path d="M10.3 8.6H15.3" stroke="#111" stroke-width="1.5"/></svg>
<svg style="left:1032.3px;top:181.4px;" width="20" height="16" viewBox="0 0 20 16"><rect x="0.5" y="0.5" width="19" height="15" fill="#b4c8ec" stroke="#5a7ab8" stroke-width="1"/><path d="M0.5 3.7H19.5 M0.5 6.9H19.5 M0.5 10.1H19.5 M0.5 13.3H19.5 M3.7 0.5V15.5 M6.9 0.5V15.5 M10.1 0.5V15.5 M13.3 0.5V15.5 M16.5 0.5V15.5" stroke="#e8f0ff" stroke-width="0.5"/><path d="M10 1.5V6.5 M10 9.5V14.5 M1.5 8H7 M13 8H18.5" stroke="#1a3a80" stroke-width="1.2"/><path d="M8 4.5L10 7L12 4.5Z M8 11.5L10 9L12 11.5Z M4.5 6L7.5 8L4.5 10Z M15.5 6L12.5 8L15.5 10Z" fill="#1a3a80"/></svg>
<div class="abs" style="left:636px;top:217.4px;width:421.5px;height:247px;background:#b9c5e2"></div>
<div class="abs" style="left:636px;top:217.4px;width:421.5px;height:1.6px;background:#6a6a6a"></div>
<div class="abs" style="left:636px;top:219px;width:18px;height:15.5px;background:#fff"></div>
<div class="abs" style="left:654px;top:219px;width:402.4px;height:14.8px;background:#c4d0e6"></div>
<div class="abs" style="left:1056.4px;top:217.4px;width:4px;height:247px;background:#fff;border-right:1.5px solid #c8c8c8"></div>
<div class="abs" style="left:636px;top:219px;width:1.6px;height:245px;background:#44464e"></div>
<div class="abs" style="left:637.5px;top:235.3px;width:16px;height:228.5px;background:#c4d0e6"></div>
<div class="abs" style="left:652.7px;top:219px;width:1.8px;height:245px;background:#7a7a7a"></div>
<div class="abs" style="left:636px;top:233.7px;width:421px;height:1.6px;background:#7a7a7a"></div>
<div class="abs" style="left:1055.3px;top:235px;width:2px;height:229px;background:#7a7a7a"></div>
<div class="abs" style="left:636px;top:462.6px;width:421px;height:1.8px;background:#7a7a7a"></div>
<div class="abs" style="left:636px;top:464.4px;width:424px;height:3.5px;background:linear-gradient(#e8e8e8,#fff)"></div>
<div class="t" style="left:668.1100000000001px;top:223px;font-size:10.4px;color:#222;font-weight:normal;">1</div>
<div class="t" style="left:701.5300000000001px;top:223px;font-size:10.4px;color:#222;font-weight:normal;">2</div>
<div class="abs" style="left:687.42px;top:235.3px;width:1px;height:227px;background:#b4bccf"></div>
<div class="t" style="left:734.9500000000002px;top:223px;font-size:10.4px;color:#222;font-weight:normal;">3</div>
<div class="abs" style="left:720.84px;top:235.3px;width:1px;height:227px;background:#b4bccf"></div>
<div class="t" style="left:768.3700000000001px;top:223px;font-size:10.4px;color:#222;font-weight:normal;">4</div>
<div class="abs" style="left:754.26px;top:235.3px;width:1px;height:227px;background:#b4bccf"></div>
<div class="t" style="left:801.7900000000002px;top:223px;font-size:10.4px;color:#222;font-weight:normal;">5</div>
<div class="abs" style="left:787.6800000000001px;top:235.3px;width:1px;height:227px;background:#b4bccf"></div>
<div class="t" style="left:835.2100000000002px;top:223px;font-size:10.4px;color:#222;font-weight:normal;">6</div>
<div class="abs" style="left:821.1px;top:235.3px;width:1px;height:227px;background:#b4bccf"></div>
<div class="t" style="left:868.6300000000001px;top:223px;font-size:10.4px;color:#222;font-weight:normal;">7</div>
<div class="abs" style="left:854.52px;top:235.3px;width:1px;height:227px;background:#b4bccf"></div>
<div class="t" style="left:902.0500000000002px;top:223px;font-size:10.4px;color:#222;font-weight:normal;">8</div>
<div class="abs" style="left:887.94px;top:235.3px;width:1px;height:227px;background:#b4bccf"></div>
<div class="t" style="left:935.4700000000001px;top:223px;font-size:10.4px;color:#222;font-weight:normal;">9</div>
<div class="abs" style="left:921.36px;top:235.3px;width:1px;height:227px;background:#b4bccf"></div>
<div class="t" style="left:966.09px;top:223px;font-size:10.4px;color:#222;font-weight:normal;">10</div>
<div class="abs" style="left:954.78px;top:235.3px;width:1px;height:227px;background:#b4bccf"></div>
<div class="t" style="left:999.5100000000001px;top:223px;font-size:10.4px;color:#222;font-weight:normal;">11</div>
<div class="abs" style="left:988.2px;top:235.3px;width:1px;height:227px;background:#b4bccf"></div>
<div class="t" style="left:1032.93px;top:223px;font-size:10.4px;color:#222;font-weight:normal;">12</div>
<div class="abs" style="left:1021.62px;top:235.3px;width:1px;height:227px;background:#b4bccf"></div>
<div class="t" style="left:641.2px;top:246.13px;font-size:10.4px;color:#333;font-weight:normal;">A</div>
<div class="t" style="left:641.2px;top:274.59000000000003px;font-size:10.4px;color:#333;font-weight:normal;">B</div>
<div class="abs" style="left:654.5px;top:263.26px;width:401px;height:1px;background:#b4bccf"></div>
<div class="t" style="left:641.2px;top:303.05000000000007px;font-size:10.4px;color:#333;font-weight:normal;">C</div>
<div class="abs" style="left:654.5px;top:291.72px;width:401px;height:1px;background:#b4bccf"></div>
<div class="t" style="left:641.2px;top:331.51000000000005px;font-size:10.4px;color:#333;font-weight:normal;">D</div>
<div class="abs" style="left:654.5px;top:320.18px;width:401px;height:1px;background:#b4bccf"></div>
<div class="t" style="left:641.2px;top:359.97px;font-size:10.4px;color:#333;font-weight:normal;">E</div>
<div class="abs" style="left:654.5px;top:348.64px;width:401px;height:1px;background:#b4bccf"></div>
<div class="t" style="left:641.2px;top:388.43000000000006px;font-size:10.4px;color:#333;font-weight:normal;">F</div>
<div class="abs" style="left:654.5px;top:377.1px;width:401px;height:1px;background:#b4bccf"></div>
<div class="t" style="left:641.2px;top:416.89000000000004px;font-size:10.4px;color:#333;font-weight:normal;">G</div>
<div class="abs" style="left:654.5px;top:405.56px;width:401px;height:1px;background:#b4bccf"></div>
<div class="t" style="left:641.2px;top:445.35px;font-size:10.4px;color:#333;font-weight:normal;">H</div>
<div class="abs" style="left:654.5px;top:434.02px;width:401px;height:1px;background:#b4bccf"></div>
<div class="abs" style="left:654.3px;top:236.20000000000002px;width:32px;height:26.2px;border-radius:42% 42% 50% 50% / 58% 58% 42% 42%;background:radial-gradient(ellipse 60% 62% at 66% 46%,#cdd8f6 0%,#e2e8fa 40%,#f8faff 72%,#fff 100%)"></div>
<div class="abs" style="left:654.3px;top:253.60000000000002px;width:31.6px;height:2.2px;background:#8cbcf0"></div>
<div class="abs" style="left:656.7px;top:254.9px;width:13.5px;height:1px;background:#5a6878"></div>
<svg style="left:655.3px;top:236.70000000000002px;" width="16.8" height="16.8" viewBox="0 0 16.8 16.8"><path d="M8.4 0 L16.8 16.8 L0 16.8Z" fill="#f7c300"/></svg>
<div class="t" style="left:660.1px;top:242.9px;font-size:10.6px;color:#151515;font-weight:normal;">1</div>
<div class="abs" style="left:687.7199999999999px;top:236.20000000000002px;width:32px;height:26.2px;border-radius:42% 42% 50% 50% / 58% 58% 42% 42%;background:radial-gradient(ellipse 60% 62% at 66% 46%,#cdd8f6 0%,#e2e8fa 40%,#f8faff 72%,#fff 100%)"></div>
<div class="abs" style="left:687.7199999999999px;top:253.60000000000002px;width:31.6px;height:2.2px;background:#8cbcf0"></div>
<div class="abs" style="left:690.12px;top:254.9px;width:13.5px;height:1px;background:#5a6878"></div>
<svg style="left:688.7199999999999px;top:236.70000000000002px;" width="16.8" height="16.8" viewBox="0 0 16.8 16.8"><path d="M8.4 0 L16.8 16.8 L0 16.8Z" fill="#f7c300"/></svg>
<div class="t" style="left:693.52px;top:242.9px;font-size:10.6px;color:#151515;font-weight:normal;">2</div>
<div class="abs" style="left:721.14px;top:236.20000000000002px;width:32px;height:26.2px;border-radius:42% 42% 50% 50% / 58% 58% 42% 42%;background:radial-gradient(ellipse 60% 62% at 66% 46%,#cdd8f6 0%,#e2e8fa 40%,#f8faff 72%,#fff 100%)"></div>
<div class="abs" style="left:721.14px;top:253.60000000000002px;width:31.6px;height:2.2px;background:#8cbcf0"></div>
<div class="abs" style="left:723.5400000000001px;top:254.9px;width:13.5px;height:1px;background:#5a6878"></div>
<svg style="left:722.14px;top:236.70000000000002px;" width="16.8" height="16.8" viewBox="0 0 16.8 16.8"><path d="M8.4 0 L16.8 16.8 L0 16.8Z" fill="#f7c300"/></svg>
<div class="t" style="left:726.94px;top:242.9px;font-size:10.6px;color:#151515;font-weight:normal;">1</div>
<div class="abs" style="left:754.56px;top:236.20000000000002px;width:32px;height:26.2px;border-radius:42% 42% 50% 50% / 58% 58% 42% 42%;background:radial-gradient(ellipse 60% 62% at 66% 46%,#cdd8f6 0%,#e2e8fa 40%,#f8faff 72%,#fff 100%)"></div>
<div class="abs" style="left:754.56px;top:253.60000000000002px;width:31.6px;height:2.2px;background:#8cbcf0"></div>
<div class="abs" style="left:756.96px;top:254.9px;width:13.5px;height:1px;background:#5a6878"></div>
<svg style="left:755.56px;top:236.70000000000002px;" width="16.8" height="16.8" viewBox="0 0 16.8 16.8"><path d="M8.4 0 L16.8 16.8 L0 16.8Z" fill="#f7c300"/></svg>
<div class="t" style="left:760.36px;top:242.9px;font-size:10.6px;color:#151515;font-weight:normal;">1</div>
<div class="abs" style="left:787.98px;top:236.20000000000002px;width:32px;height:26.2px;border-radius:42% 42% 50% 50% / 58% 58% 42% 42%;background:radial-gradient(ellipse 60% 62% at 66% 46%,#cdd8f6 0%,#e2e8fa 40%,#f8faff 72%,#fff 100%)"></div>
<div class="abs" style="left:787.98px;top:253.60000000000002px;width:31.6px;height:2.2px;background:#8cbcf0"></div>
<div class="abs" style="left:790.3800000000001px;top:254.9px;width:13.5px;height:1px;background:#5a6878"></div>
<svg style="left:788.98px;top:236.70000000000002px;" width="16.8" height="16.8" viewBox="0 0 16.8 16.8"><path d="M8.4 0 L16.8 16.8 L0 16.8Z" fill="#f7c300"/></svg>
<div class="t" style="left:793.7800000000001px;top:242.9px;font-size:10.6px;color:#151515;font-weight:normal;">1</div>
<div class="abs" style="left:821.4px;top:236.20000000000002px;width:32px;height:26.2px;border-radius:42% 42% 50% 50% / 58% 58% 42% 42%;background:radial-gradient(ellipse 60% 62% at 66% 46%,#cdd8f6 0%,#e2e8fa 40%,#f8faff 72%,#fff 100%)"></div>
<div class="abs" style="left:821.4px;top:253.60000000000002px;width:31.6px;height:2.2px;background:#8cbcf0"></div>
<div class="abs" style="left:823.8000000000001px;top:254.9px;width:13.5px;height:1px;background:#5a6878"></div>
<svg style="left:822.4px;top:236.70000000000002px;" width="16.8" height="16.8" viewBox="0 0 16.8 16.8"><path d="M8.4 0 L16.8 16.8 L0 16.8Z" fill="#f7c300"/></svg>
<div class="t" style="left:827.2px;top:242.9px;font-size:10.6px;color:#151515;font-weight:normal;">1</div>
<div class="abs" style="left:854.8199999999999px;top:236.20000000000002px;width:32px;height:26.2px;border-radius:42% 42% 50% 50% / 58% 58% 42% 42%;background:radial-gradient(ellipse 60% 62% at 66% 46%,#cdd8f6 0%,#e2e8fa 40%,#f8faff 72%,#fff 100%)"></div>
<div class="abs" style="left:854.8199999999999px;top:253.60000000000002px;width:31.6px;height:2.2px;background:#8cbcf0"></div>
<div class="abs" style="left:857.22px;top:254.9px;width:13.5px;height:1px;background:#5a6878"></div>
<svg style="left:855.8199999999999px;top:236.70000000000002px;" width="16.8" height="16.8" viewBox="0 0 16.8 16.8"><path d="M8.4 0 L16.8 16.8 L0 16.8Z" fill="#f7c300"/></svg>
<div class="t" style="left:860.62px;top:242.9px;font-size:10.6px;color:#151515;font-weight:normal;">1</div>
<div class="abs" style="left:888.24px;top:236.20000000000002px;width:32px;height:26.2px;border-radius:42% 42% 50% 50% / 58% 58% 42% 42%;background:radial-gradient(ellipse 60% 62% at 66% 46%,#cdd8f6 0%,#e2e8fa 40%,#f8faff 72%,#fff 100%)"></div>
<div class="abs" style="left:888.24px;top:253.60000000000002px;width:31.6px;height:2.2px;background:#8cbcf0"></div>
<div class="abs" style="left:890.6400000000001px;top:254.9px;width:13.5px;height:1px;background:#5a6878"></div>
<svg style="left:889.24px;top:236.70000000000002px;" width="16.8" height="16.8" viewBox="0 0 16.8 16.8"><path d="M8.4 0 L16.8 16.8 L0 16.8Z" fill="#f7c300"/></svg>
<div class="t" style="left:894.0400000000001px;top:242.9px;font-size:10.6px;color:#151515;font-weight:normal;">1</div>
<div class="abs" style="left:921.66px;top:236.20000000000002px;width:32px;height:26.2px;border-radius:42% 42% 50% 50% / 58% 58% 42% 42%;background:radial-gradient(ellipse 60% 62% at 66% 46%,#cdd8f6 0%,#e2e8fa 40%,#f8faff 72%,#fff 100%)"></div>
<div class="abs" style="left:921.66px;top:253.60000000000002px;width:31.6px;height:2.2px;background:#8cbcf0"></div>
<div class="abs" style="left:924.0600000000001px;top:254.9px;width:13.5px;height:1px;background:#5a6878"></div>
<svg style="left:922.66px;top:236.70000000000002px;" width="16.8" height="16.8" viewBox="0 0 16.8 16.8"><path d="M8.4 0 L16.8 16.8 L0 16.8Z" fill="#f7c300"/></svg>
<div class="t" style="left:927.46px;top:242.9px;font-size:10.6px;color:#151515;font-weight:normal;">1</div>
<div class="abs" style="left:955.0799999999999px;top:236.20000000000002px;width:32px;height:26.2px;border-radius:42% 42% 50% 50% / 58% 58% 42% 42%;background:radial-gradient(ellipse 60% 62% at 66% 46%,#cdd8f6 0%,#e2e8fa 40%,#f8faff 72%,#fff 100%)"></div>
<div class="abs" style="left:955.0799999999999px;top:253.60000000000002px;width:31.6px;height:2.2px;background:#8cbcf0"></div>
<div class="abs" style="left:957.48px;top:254.9px;width:13.5px;height:1px;background:#5a6878"></div>
<svg style="left:956.0799999999999px;top:236.70000000000002px;" width="16.8" height="16.8" viewBox="0 0 16.8 16.8"><path d="M8.4 0 L16.8 16.8 L0 16.8Z" fill="#f7c300"/></svg>
<div class="t" style="left:960.88px;top:242.9px;font-size:10.6px;color:#151515;font-weight:normal;">1</div>
<div class="abs" style="left:988.5px;top:236.20000000000002px;width:32px;height:26.2px;border-radius:42% 42% 50% 50% / 58% 58% 42% 42%;background:radial-gradient(ellipse 60% 62% at 66% 46%,#cdd8f6 0%,#e2e8fa 40%,#f8faff 72%,#fff 100%)"></div>
<div class="abs" style="left:988.5px;top:253.60000000000002px;width:31.6px;height:2.2px;background:#8cbcf0"></div>
<div class="abs" style="left:990.9000000000001px;top:254.9px;width:13.5px;height:1px;background:#5a6878"></div>
<svg style="left:989.5px;top:236.70000000000002px;" width="16.8" height="16.8" viewBox="0 0 16.8 16.8"><path d="M8.4 0 L16.8 16.8 L0 16.8Z" fill="#f7c300"/></svg>
<div class="t" style="left:994.3000000000001px;top:242.9px;font-size:10.6px;color:#151515;font-weight:normal;">1</div>
<div class="abs" style="left:1021.92px;top:236.20000000000002px;width:32px;height:26.2px;border-radius:42% 42% 50% 50% / 58% 58% 42% 42%;background:radial-gradient(ellipse 60% 62% at 66% 46%,#cdd8f6 0%,#e2e8fa 40%,#f8faff 72%,#fff 100%)"></div>
<div class="abs" style="left:1021.92px;top:253.60000000000002px;width:31.6px;height:2.2px;background:#8cbcf0"></div>
<div class="abs" style="left:1024.32px;top:254.9px;width:13.5px;height:1px;background:#5a6878"></div>
<svg style="left:1022.92px;top:236.70000000000002px;" width="16.8" height="16.8" viewBox="0 0 16.8 16.8"><path d="M8.4 0 L16.8 16.8 L0 16.8Z" fill="#f7c300"/></svg>
<div class="t" style="left:1027.72px;top:242.9px;font-size:10.6px;color:#151515;font-weight:normal;">1</div>
<div class="abs" style="left:654.3px;top:264.65999999999997px;width:32px;height:26.2px;border-radius:42% 42% 50% 50% / 58% 58% 42% 42%;background:radial-gradient(ellipse 60% 62% at 66% 46%,#cdd8f6 0%,#e2e8fa 40%,#f8faff 72%,#fff 100%)"></div>
<div class="abs" style="left:654.3px;top:282.06px;width:31.6px;height:2.2px;background:#8cbcf0"></div>
<div class="abs" style="left:656.7px;top:283.36px;width:13.5px;height:1px;background:#5a6878"></div>
<svg style="left:655.3px;top:265.15999999999997px;" width="16.8" height="16.8" viewBox="0 0 16.8 16.8"><path d="M8.4 0 L16.8 16.8 L0 16.8Z" fill="#f7c300"/></svg>
<div class="t" style="left:660.1px;top:271.36px;font-size:10.6px;color:#151515;font-weight:normal;">1</div>
<div class="abs" style="left:687.7199999999999px;top:264.65999999999997px;width:32px;height:26.2px;border-radius:42% 42% 50% 50% / 58% 58% 42% 42%;background:radial-gradient(ellipse 60% 62% at 66% 46%,#cdd8f6 0%,#e2e8fa 40%,#f8faff 72%,#fff 100%)"></div>
<div class="abs" style="left:687.7199999999999px;top:282.06px;width:31.6px;height:2.2px;background:#8cbcf0"></div>
<div class="abs" style="left:690.12px;top:283.36px;width:13.5px;height:1px;background:#5a6878"></div>
<svg style="left:688.7199999999999px;top:265.15999999999997px;" width="16.8" height="16.8" viewBox="0 0 16.8 16.8"><path d="M8.4 0 L16.8 16.8 L0 16.8Z" fill="#f7c300"/></svg>
<div class="t" style="left:693.52px;top:271.36px;font-size:10.6px;color:#151515;font-weight:normal;">1</div>
<div class="abs" style="left:721.14px;top:264.65999999999997px;width:32px;height:26.2px;border-radius:42% 42% 50% 50% / 58% 58% 42% 42%;background:radial-gradient(ellipse 60% 62% at 66% 46%,#cdd8f6 0%,#e2e8fa 40%,#f8faff 72%,#fff 100%)"></div>
<div class="abs" style="left:721.14px;top:282.06px;width:31.6px;height:2.2px;background:#8cbcf0"></div>
<div class="abs" style="left:723.5400000000001px;top:283.36px;width:13.5px;height:1px;background:#5a6878"></div>
<svg style="left:722.14px;top:265.15999999999997px;" width="16.8" height="16.8" viewBox="0 0 16.8 16.8"><path d="M8.4 0 L16.8 16.8 L0 16.8Z" fill="#f7c300"/></svg>
<div class="t" style="left:726.94px;top:271.36px;font-size:10.6px;color:#151515;font-weight:normal;">1</div>
<div class="abs" style="left:754.56px;top:264.65999999999997px;width:32px;height:26.2px;border-radius:42% 42% 50% 50% / 58% 58% 42% 42%;background:radial-gradient(ellipse 60% 62% at 66% 46%,#cdd8f6 0%,#e2e8fa 40%,#f8faff 72%,#fff 100%)"></div>
<div class="abs" style="left:754.56px;top:282.06px;width:31.6px;height:2.2px;background:#8cbcf0"></div>
<div class="abs" style="left:756.96px;top:283.36px;width:13.5px;height:1px;background:#5a6878"></div>
<svg style="left:755.56px;top:265.15999999999997px;" width="16.8" height="16.8" viewBox="0 0 16.8 16.8"><path d="M8.4 0 L16.8 16.8 L0 16.8Z" fill="#f7c300"/></svg>
<div class="t" style="left:760.36px;top:271.36px;font-size:10.6px;color:#151515;font-weight:normal;">1</div>
<div class="abs" style="left:787.98px;top:264.65999999999997px;width:32px;height:26.2px;border-radius:42% 42% 50% 50% / 58% 58% 42% 42%;background:radial-gradient(ellipse 60% 62% at 66% 46%,#cdd8f6 0%,#e2e8fa 40%,#f8faff 72%,#fff 100%)"></div>
<div class="abs" style="left:787.98px;top:282.06px;width:31.6px;height:2.2px;background:#8cbcf0"></div>
<div class="abs" style="left:790.3800000000001px;top:283.36px;width:13.5px;height:1px;background:#5a6878"></div>
<svg style="left:788.98px;top:265.15999999999997px;" width="16.8" height="16.8" viewBox="0 0 16.8 16.8"><path d="M8.4 0 L16.8 16.8 L0 16.8Z" fill="#f7c300"/></svg>
<div class="t" style="left:793.7800000000001px;top:271.36px;font-size:10.6px;color:#151515;font-weight:normal;">1</div>
<div class="abs" style="left:821.4px;top:264.65999999999997px;width:32px;height:26.2px;border-radius:42% 42% 50% 50% / 58% 58% 42% 42%;background:radial-gradient(ellipse 60% 62% at 66% 46%,#cdd8f6 0%,#e2e8fa 40%,#f8faff 72%,#fff 100%)"></div>
<div class="abs" style="left:821.4px;top:282.06px;width:31.6px;height:2.2px;background:#8cbcf0"></div>
<div class="abs" style="left:823.8000000000001px;top:283.36px;width:13.5px;height:1px;background:#5a6878"></div>
<svg style="left:822.4px;top:265.15999999999997px;" width="16.8" height="16.8" viewBox="0 0 16.8 16.8"><path d="M8.4 0 L16.8 16.8 L0 16.8Z" fill="#f7c300"/></svg>
<div class="t" style="left:827.2px;top:271.36px;font-size:10.6px;color:#151515;font-weight:normal;">1</div>
<div class="abs" style="left:854.8199999999999px;top:264.65999999999997px;width:32px;height:26.2px;border-radius:42% 42% 50% 50% / 58% 58% 42% 42%;background:radial-gradient(ellipse 60% 62% at 66% 46%,#cdd8f6 0%,#e2e8fa 40%,#f8faff 72%,#fff 100%)"></div>
<div class="abs" style="left:854.8199999999999px;top:282.06px;width:31.6px;height:2.2px;background:#8cbcf0"></div>
<div class="abs" style="left:857.22px;top:283.36px;width:13.5px;height:1px;background:#5a6878"></div>
<svg style="left:855.8199999999999px;top:265.15999999999997px;" width="16.8" height="16.8" viewBox="0 0 16.8 16.8"><path d="M8.4 0 L16.8 16.8 L0 16.8Z" fill="#f7c300"/></svg>
<div class="t" style="left:860.62px;top:271.36px;font-size:10.6px;color:#151515;font-weight:normal;">1</div>
<div class="abs" style="left:888.24px;top:264.65999999999997px;width:32px;height:26.2px;border-radius:42% 42% 50% 50% / 58% 58% 42% 42%;background:radial-gradient(ellipse 60% 62% at 66% 46%,#cdd8f6 0%,#e2e8fa 40%,#f8faff 72%,#fff 100%)"></div>
<div class="abs" style="left:888.24px;top:282.06px;width:31.6px;height:2.2px;background:#8cbcf0"></div>
<div class="abs" style="left:890.6400000000001px;top:283.36px;width:13.5px;height:1px;background:#5a6878"></div>
<svg style="left:889.24px;top:265.15999999999997px;" width="16.8" height="16.8" viewBox="0 0 16.8 16.8"><path d="M8.4 0 L16.8 16.8 L0 16.8Z" fill="#f7c300"/></svg>
<div class="t" style="left:894.0400000000001px;top:271.36px;font-size:10.6px;color:#151515;font-weight:normal;">1</div>
<div class="abs" style="left:921.66px;top:264.65999999999997px;width:32px;height:26.2px;border-radius:42% 42% 50% 50% / 58% 58% 42% 42%;background:radial-gradient(ellipse 60% 62% at 66% 46%,#cdd8f6 0%,#e2e8fa 40%,#f8faff 72%,#fff 100%)"></div>
<div class="abs" style="left:921.66px;top:282.06px;width:31.6px;height:2.2px;background:#8cbcf0"></div>
<div class="abs" style="left:924.0600000000001px;top:283.36px;width:13.5px;height:1px;background:#5a6878"></div>
<svg style="left:922.66px;top:265.15999999999997px;" width="16.8" height="16.8" viewBox="0 0 16.8 16.8"><path d="M8.4 0 L16.8 16.8 L0 16.8Z" fill="#f7c300"/></svg>
<div class="t" style="left:927.46px;top:271.36px;font-size:10.6px;color:#151515;font-weight:normal;">2</div>
<div class="abs" style="left:955.0799999999999px;top:264.65999999999997px;width:32px;height:26.2px;border-radius:42% 42% 50% 50% / 58% 58% 42% 42%;background:radial-gradient(ellipse 60% 62% at 66% 46%,#cdd8f6 0%,#e2e8fa 40%,#f8faff 72%,#fff 100%)"></div>
<div class="abs" style="left:955.0799999999999px;top:282.06px;width:31.6px;height:2.2px;background:#8cbcf0"></div>
<div class="abs" style="left:957.48px;top:283.36px;width:13.5px;height:1px;background:#5a6878"></div>
<svg style="left:956.0799999999999px;top:265.15999999999997px;" width="16.8" height="16.8" viewBox="0 0 16.8 16.8"><path d="M8.4 0 L16.8 16.8 L0 16.8Z" fill="#f7c300"/></svg>
<div class="t" style="left:960.88px;top:271.36px;font-size:10.6px;color:#151515;font-weight:normal;">2</div>
<div class="abs" style="left:988.5px;top:264.65999999999997px;width:32px;height:26.2px;border-radius:42% 42% 50% 50% / 58% 58% 42% 42%;background:radial-gradient(ellipse 60% 62% at 66% 46%,#cdd8f6 0%,#e2e8fa 40%,#f8faff 72%,#fff 100%)"></div>
<div class="abs" style="left:988.5px;top:282.06px;width:31.6px;height:2.2px;background:#8cbcf0"></div>
<div class="abs" style="left:990.9000000000001px;top:283.36px;width:13.5px;height:1px;background:#5a6878"></div>
<svg style="left:989.5px;top:265.15999999999997px;" width="16.8" height="16.8" viewBox="0 0 16.8 16.8"><path d="M8.4 0 L16.8 16.8 L0 16.8Z" fill="#f7c300"/></svg>
<div class="t" style="left:994.3000000000001px;top:271.36px;font-size:10.6px;color:#151515;font-weight:normal;">1</div>
<div class="abs" style="left:1021.92px;top:264.65999999999997px;width:32px;height:26.2px;border-radius:42% 42% 50% 50% / 58% 58% 42% 42%;background:radial-gradient(ellipse 60% 62% at 66% 46%,#cdd8f6 0%,#e2e8fa 40%,#f8faff 72%,#fff 100%)"></div>
<div class="abs" style="left:1021.92px;top:282.06px;width:31.6px;height:2.2px;background:#8cbcf0"></div>
<div class="abs" style="left:1024.32px;top:283.36px;width:13.5px;height:1px;background:#5a6878"></div>
<svg style="left:1022.92px;top:265.15999999999997px;" width="16.8" height="16.8" viewBox="0 0 16.8 16.8"><path d="M8.4 0 L16.8 16.8 L0 16.8Z" fill="#f7c300"/></svg>
<div class="t" style="left:1027.72px;top:271.36px;font-size:10.6px;color:#151515;font-weight:normal;">2</div>
<div class="abs" style="left:654.3px;top:293.12px;width:32px;height:26.2px;border-radius:42% 42% 50% 50% / 58% 58% 42% 42%;background:radial-gradient(ellipse 60% 62% at 66% 46%,#cdd8f6 0%,#e2e8fa 40%,#f8faff 72%,#fff 100%)"></div>
<div class="abs" style="left:654.3px;top:310.52000000000004px;width:31.6px;height:2.2px;background:#8cbcf0"></div>
<div class="abs" style="left:656.7px;top:311.82000000000005px;width:13.5px;height:1px;background:#5a6878"></div>
<svg style="left:655.3px;top:293.62px;" width="16.8" height="16.8" viewBox="0 0 16.8 16.8"><path d="M8.4 0 L16.8 16.8 L0 16.8Z" fill="#f7c300"/></svg>
<div class="t" style="left:660.1px;top:299.82000000000005px;font-size:10.6px;color:#151515;font-weight:normal;">1</div>
<div class="abs" style="left:687.7199999999999px;top:293.12px;width:32px;height:26.2px;border-radius:42% 42% 50% 50% / 58% 58% 42% 42%;background:radial-gradient(ellipse 60% 62% at 66% 46%,#cdd8f6 0%,#e2e8fa 40%,#f8faff 72%,#fff 100%)"></div>
<div class="abs" style="left:687.7199999999999px;top:310.52000000000004px;width:31.6px;height:2.2px;background:#8cbcf0"></div>
<div class="abs" style="left:690.12px;top:311.82000000000005px;width:13.5px;height:1px;background:#5a6878"></div>
<svg style="left:688.7199999999999px;top:293.62px;" width="16.8" height="16.8" viewBox="0 0 16.8 16.8"><path d="M8.4 0 L16.8 16.8 L0 16.8Z" fill="#f7c300"/></svg>
<div class="t" style="left:693.52px;top:299.82000000000005px;font-size:10.6px;color:#151515;font-weight:normal;">1</div>
<div class="abs" style="left:721.14px;top:293.12px;width:32px;height:26.2px;border-radius:42% 42% 50% 50% / 58% 58% 42% 42%;background:radial-gradient(ellipse 60% 62% at 66% 46%,#cdd8f6 0%,#e2e8fa 40%,#f8faff 72%,#fff 100%)"></div>
<div class="abs" style="left:721.14px;top:310.52000000000004px;width:31.6px;height:2.2px;background:#8cbcf0"></div>
<div class="abs" style="left:723.5400000000001px;top:311.82000000000005px;width:13.5px;height:1px;background:#5a6878"></div>
<svg style="left:722.14px;top:293.62px;" width="16.8" height="16.8" viewBox="0 0 16.8 16.8"><path d="M8.4 0 L16.8 16.8 L0 16.8Z" fill="#f7c300"/></svg>
<div class="t" style="left:726.94px;top:299.82000000000005px;font-size:10.6px;color:#151515;font-weight:normal;">1</div>
<div class="abs" style="left:754.56px;top:293.12px;width:32px;height:26.2px;border-radius:42% 42% 50% 50% / 58% 58% 42% 42%;background:radial-gradient(ellipse 60% 62% at 66% 46%,#cdd8f6 0%,#e2e8fa 40%,#f8faff 72%,#fff 100%)"></div>
<div class="abs" style="left:754.56px;top:310.52000000000004px;width:31.6px;height:2.2px;background:#8cbcf0"></div>
<div class="abs" style="left:756.96px;top:311.82000000000005px;width:13.5px;height:1px;background:#5a6878"></div>
<svg style="left:755.56px;top:293.62px;" width="16.8" height="16.8" viewBox="0 0 16.8 16.8"><path d="M8.4 0 L16.8 16.8 L0 16.8Z" fill="#f7c300"/></svg>
<div class="t" style="left:760.36px;top:299.82000000000005px;font-size:10.6px;color:#151515;font-weight:normal;">1</div>
<div class="abs" style="left:787.98px;top:293.12px;width:32px;height:26.2px;border-radius:42% 42% 50% 50% / 58% 58% 42% 42%;background:radial-gradient(ellipse 60% 62% at 66% 46%,#cdd8f6 0%,#e2e8fa 40%,#f8faff 72%,#fff 100%)"></div>
<div class="abs" style="left:787.98px;top:310.52000000000004px;width:31.6px;height:2.2px;background:#8cbcf0"></div>
<div class="abs" style="left:790.3800000000001px;top:311.82000000000005px;width:13.5px;height:1px;background:#5a6878"></div>
<svg style="left:788.98px;top:293.62px;" width="16.8" height="16.8" viewBox="0 0 16.8 16.8"><path d="M8.4 0 L16.8 16.8 L0 16.8Z" fill="#f7c300"/></svg>
<div class="t" style="left:793.7800000000001px;top:299.82000000000005px;font-size:10.6px;color:#151515;font-weight:normal;">1</div>
<div class="abs" style="left:821.4px;top:293.12px;width:32px;height:26.2px;border-radius:42% 42% 50% 50% / 58% 58% 42% 42%;background:radial-gradient(ellipse 60% 62% at 66% 46%,#cdd8f6 0%,#e2e8fa 40%,#f8faff 72%,#fff 100%)"></div>
<div class="abs" style="left:821.4px;top:310.52000000000004px;width:31.6px;height:2.2px;background:#8cbcf0"></div>
<div class="abs" style="left:823.8000000000001px;top:311.82000000000005px;width:13.5px;height:1px;background:#5a6878"></div>
<svg style="left:822.4px;top:293.62px;" width="16.8" height="16.8" viewBox="0 0 16.8 16.8"><path d="M8.4 0 L16.8 16.8 L0 16.8Z" fill="#f7c300"/></svg>
<div class="t" style="left:827.2px;top:299.82000000000005px;font-size:10.6px;color:#151515;font-weight:normal;">1</div>
<div class="abs" style="left:854.8199999999999px;top:293.12px;width:32px;height:26.2px;border-radius:42% 42% 50% 50% / 58% 58% 42% 42%;background:radial-gradient(ellipse 60% 62% at 66% 46%,#cdd8f6 0%,#e2e8fa 40%,#f8faff 72%,#fff 100%)"></div>
<div class="abs" style="left:854.8199999999999px;top:310.52000000000004px;width:31.6px;height:2.2px;background:#8cbcf0"></div>
<div class="abs" style="left:857.22px;top:311.82000000000005px;width:13.5px;height:1px;background:#5a6878"></div>
<svg style="left:855.8199999999999px;top:293.62px;" width="16.8" height="16.8" viewBox="0 0 16.8 16.8"><path d="M8.4 0 L16.8 16.8 L0 16.8Z" fill="#f7c300"/></svg>
<div class="t" style="left:860.62px;top:299.82000000000005px;font-size:10.6px;color:#151515;font-weight:normal;">1</div>
<div class="abs" style="left:888.24px;top:293.12px;width:32px;height:26.2px;border-radius:42% 42% 50% 50% / 58% 58% 42% 42%;background:radial-gradient(ellipse 60% 62% at 66% 46%,#cdd8f6 0%,#e2e8fa 40%,#f8faff 72%,#fff 100%)"></div>
<div class="abs" style="left:888.24px;top:310.52000000000004px;width:31.6px;height:2.2px;background:#8cbcf0"></div>
<div class="abs" style="left:890.6400000000001px;top:311.82000000000005px;width:13.5px;height:1px;background:#5a6878"></div>
<svg style="left:889.24px;top:293.62px;" width="16.8" height="16.8" viewBox="0 0 16.8 16.8"><path d="M8.4 0 L16.8 16.8 L0 16.8Z" fill="#f7c300"/></svg>
<div class="t" style="left:894.0400000000001px;top:299.82000000000005px;font-size:10.6px;color:#151515;font-weight:normal;">1</div>
<div class="abs" style="left:921.66px;top:293.12px;width:32px;height:26.2px;border-radius:42% 42% 50% 50% / 58% 58% 42% 42%;background:radial-gradient(ellipse 60% 62% at 66% 46%,#cdd8f6 0%,#e2e8fa 40%,#f8faff 72%,#fff 100%)"></div>
<div class="abs" style="left:921.66px;top:310.52000000000004px;width:31.6px;height:2.2px;background:#8cbcf0"></div>
<div class="abs" style="left:924.0600000000001px;top:311.82000000000005px;width:13.5px;height:1px;background:#5a6878"></div>
<svg style="left:922.66px;top:293.62px;" width="16.8" height="16.8" viewBox="0 0 16.8 16.8"><path d="M8.4 0 L16.8 16.8 L0 16.8Z" fill="#f7c300"/></svg>
<div class="t" style="left:927.46px;top:299.82000000000005px;font-size:10.6px;color:#151515;font-weight:normal;">1</div>
<div class="abs" style="left:955.0799999999999px;top:293.12px;width:32px;height:26.2px;border-radius:42% 42% 50% 50% / 58% 58% 42% 42%;background:radial-gradient(ellipse 60% 62% at 66% 46%,#cdd8f6 0%,#e2e8fa 40%,#f8faff 72%,#fff 100%)"></div>
<div class="abs" style="left:955.0799999999999px;top:310.52000000000004px;width:31.6px;height:2.2px;background:#8cbcf0"></div>
<div class="abs" style="left:957.48px;top:311.82000000000005px;width:13.5px;height:1px;background:#5a6878"></div>
<svg style="left:956.0799999999999px;top:293.62px;" width="16.8" height="16.8" viewBox="0 0 16.8 16.8"><path d="M8.4 0 L16.8 16.8 L0 16.8Z" fill="#f7c300"/></svg>
<div class="t" style="left:960.88px;top:299.82000000000005px;font-size:10.6px;color:#151515;font-weight:normal;">1</div>
<div class="abs" style="left:988.5px;top:293.12px;width:32px;height:26.2px;border-radius:42% 42% 50% 50% / 58% 58% 42% 42%;background:radial-gradient(ellipse 60% 62% at 66% 46%,#cdd8f6 0%,#e2e8fa 40%,#f8faff 72%,#fff 100%)"></div>
<div class="abs" style="left:988.5px;top:310.52000000000004px;width:31.6px;height:2.2px;background:#8cbcf0"></div>
<div class="abs" style="left:990.9000000000001px;top:311.82000000000005px;width:13.5px;height:1px;background:#5a6878"></div>
<svg style="left:989.5px;top:293.62px;" width="16.8" height="16.8" viewBox="0 0 16.8 16.8"><path d="M8.4 0 L16.8 16.8 L0 16.8Z" fill="#f7c300"/></svg>
<div class="t" style="left:994.3000000000001px;top:299.82000000000005px;font-size:10.6px;color:#151515;font-weight:normal;">1</div>
<div class="abs" style="left:1021.92px;top:293.12px;width:32px;height:26.2px;border-radius:42% 42% 50% 50% / 58% 58% 42% 42%;background:radial-gradient(ellipse 60% 62% at 66% 46%,#cdd8f6 0%,#e2e8fa 40%,#f8faff 72%,#fff 100%)"></div>
<div class="abs" style="left:1021.92px;top:310.52000000000004px;width:31.6px;height:2.2px;background:#8cbcf0"></div>
<div class="abs" style="left:1024.32px;top:311.82000000000005px;width:13.5px;height:1px;background:#5a6878"></div>
<svg style="left:1022.92px;top:293.62px;" width="16.8" height="16.8" viewBox="0 0 16.8 16.8"><path d="M8.4 0 L16.8 16.8 L0 16.8Z" fill="#f7c300"/></svg>
<div class="t" style="left:1027.72px;top:299.82000000000005px;font-size:10.6px;color:#151515;font-weight:normal;">1</div>
<div class="abs" style="left:654.3px;top:321.58px;width:32px;height:26.2px;border-radius:42% 42% 50% 50% / 58% 58% 42% 42%;background:radial-gradient(ellipse 60% 62% at 66% 46%,#cdd8f6 0%,#e2e8fa 40%,#f8faff 72%,#fff 100%)"></div>
<div class="abs" style="left:654.3px;top:338.98px;width:31.6px;height:2.2px;background:#8cbcf0"></div>
<div class="abs" style="left:656.7px;top:340.28000000000003px;width:13.5px;height:1px;background:#5a6878"></div>
<svg style="left:655.3px;top:322.08px;" width="16.8" height="16.8" viewBox="0 0 16.8 16.8"><path d="M8.4 0 L16.8 16.8 L0 16.8Z" fill="#f7c300"/></svg>
<div class="t" style="left:660.1px;top:328.28000000000003px;font-size:10.6px;color:#151515;font-weight:normal;">1</div>
<div class="abs" style="left:687.7199999999999px;top:321.58px;width:32px;height:26.2px;border-radius:42% 42% 50% 50% / 58% 58% 42% 42%;background:radial-gradient(ellipse 60% 62% at 66% 46%,#cdd8f6 0%,#e2e8fa 40%,#f8faff 72%,#fff 100%)"></div>
<div class="abs" style="left:687.7199999999999px;top:338.98px;width:31.6px;height:2.2px;background:#8cbcf0"></div>
<div class="abs" style="left:690.12px;top:340.28000000000003px;width:13.5px;height:1px;background:#5a6878"></div>
<svg style="left:688.7199999999999px;top:322.08px;" width="16.8" height="16.8" viewBox="0 0 16.8 16.8"><path d="M8.4 0 L16.8 16.8 L0 16.8Z" fill="#f7c300"/></svg>
<div class="t" style="left:693.52px;top:328.28000000000003px;font-size:10.6px;color:#151515;font-weight:normal;">1</div>
<div class="abs" style="left:721.14px;top:321.58px;width:32px;height:26.2px;border-radius:42% 42% 50% 50% / 58% 58% 42% 42%;background:radial-gradient(ellipse 60% 62% at 66% 46%,#cdd8f6 0%,#e2e8fa 40%,#f8faff 72%,#fff 100%)"></div>
<div class="abs" style="left:721.14px;top:338.98px;width:31.6px;height:2.2px;background:#8cbcf0"></div>
<div class="abs" style="left:723.5400000000001px;top:340.28000000000003px;width:13.5px;height:1px;background:#5a6878"></div>
<svg style="left:722.14px;top:322.08px;" width="16.8" height="16.8" viewBox="0 0 16.8 16.8"><path d="M8.4 0 L16.8 16.8 L0 16.8Z" fill="#f7c300"/></svg>
<div class="t" style="left:726.94px;top:328.28000000000003px;font-size:10.6px;color:#151515;font-weight:normal;">1</div>
<div class="abs" style="left:754.56px;top:321.58px;width:32px;height:26.2px;border-radius:42% 42% 50% 50% / 58% 58% 42% 42%;background:radial-gradient(ellipse 60% 62% at 66% 46%,#cdd8f6 0%,#e2e8fa 40%,#f8faff 72%,#fff 100%)"></div>
<div class="abs" style="left:754.56px;top:338.98px;width:31.6px;height:2.2px;background:#8cbcf0"></div>
<div class="abs" style="left:756.96px;top:340.28000000000003px;width:13.5px;height:1px;background:#5a6878"></div>
<svg style="left:755.56px;top:322.08px;" width="16.8" height="16.8" viewBox="0 0 16.8 16.8"><path d="M8.4 0 L16.8 16.8 L0 16.8Z" fill="#f7c300"/></svg>
<div class="t" style="left:760.36px;top:328.28000000000003px;font-size:10.6px;color:#151515;font-weight:normal;">1</div>
<div class="abs" style="left:787.98px;top:321.58px;width:32px;height:26.2px;border-radius:42% 42% 50% 50% / 58% 58% 42% 42%;background:radial-gradient(ellipse 60% 62% at 66% 46%,#cdd8f6 0%,#e2e8fa 40%,#f8faff 72%,#fff 100%)"></div>
<div class="abs" style="left:787.98px;top:338.98px;width:31.6px;height:2.2px;background:#8cbcf0"></div>
<div class="abs" style="left:790.3800000000001px;top:340.28000000000003px;width:13.5px;height:1px;background:#5a6878"></div>
<svg style="left:788.98px;top:322.08px;" width="16.8" height="16.8" viewBox="0 0 16.8 16.8"><path d="M8.4 0 L16.8 16.8 L0 16.8Z" fill="#f7c300"/></svg>
<div class="t" style="left:793.7800000000001px;top:328.28000000000003px;font-size:10.6px;color:#151515;font-weight:normal;">1</div>
<div class="abs" style="left:821.4px;top:321.58px;width:32px;height:26.2px;border-radius:42% 42% 50% 50% / 58% 58% 42% 42%;background:radial-gradient(ellipse 60% 62% at 66% 46%,#cdd8f6 0%,#e2e8fa 40%,#f8faff 72%,#fff 100%)"></div>
<div class="abs" style="left:821.4px;top:338.98px;width:31.6px;height:2.2px;background:#8cbcf0"></div>
<div class="abs" style="left:823.8000000000001px;top:340.28000000000003px;width:13.5px;height:1px;background:#5a6878"></div>
<svg style="left:822.4px;top:322.08px;" width="16.8" height="16.8" viewBox="0 0 16.8 16.8"><path d="M8.4 0 L16.8 16.8 L0 16.8Z" fill="#f7c300"/></svg>
<div class="t" style="left:827.2px;top:328.28000000000003px;font-size:10.6px;color:#151515;font-weight:normal;">1</div>
<div class="abs" style="left:854.8199999999999px;top:321.58px;width:32px;height:26.2px;border-radius:42% 42% 50% 50% / 58% 58% 42% 42%;background:radial-gradient(ellipse 60% 62% at 66% 46%,#cdd8f6 0%,#e2e8fa 40%,#f8faff 72%,#fff 100%)"></div>
<div class="abs" style="left:854.8199999999999px;top:338.98px;width:31.6px;height:2.2px;background:#8cbcf0"></div>
<div class="abs" style="left:857.22px;top:340.28000000000003px;width:13.5px;height:1px;background:#5a6878"></div>
<svg style="left:855.8199999999999px;top:322.08px;" width="16.8" height="16.8" viewBox="0 0 16.8 16.8"><path d="M8.4 0 L16.8 16.8 L0 16.8Z" fill="#f7c300"/></svg>
<div class="t" style="left:860.62px;top:328.28000000000003px;font-size:10.6px;color:#151515;font-weight:normal;">1</div>
<div class="abs" style="left:888.24px;top:321.58px;width:32px;height:26.2px;border-radius:42% 42% 50% 50% / 58% 58% 42% 42%;background:radial-gradient(ellipse 60% 62% at 66% 46%,#cdd8f6 0%,#e2e8fa 40%,#f8faff 72%,#fff 100%)"></div>
<div class="abs" style="left:888.24px;top:338.98px;width:31.6px;height:2.2px;background:#8cbcf0"></div>
<div class="abs" style="left:890.6400000000001px;top:340.28000000000003px;width:13.5px;height:1px;background:#5a6878"></div>
<svg style="left:889.24px;top:322.08px;" width="16.8" height="16.8" viewBox="0 0 16.8 16.8"><path d="M8.4 0 L16.8 16.8 L0 16.8Z" fill="#f7c300"/></svg>
<div class="t" style="left:894.0400000000001px;top:328.28000000000003px;font-size:10.6px;color:#151515;font-weight:normal;">1</div>
<div class="abs" style="left:921.66px;top:321.58px;width:32px;height:26.2px;border-radius:42% 42% 50% 50% / 58% 58% 42% 42%;background:radial-gradient(ellipse 60% 62% at 66% 46%,#cdd8f6 0%,#e2e8fa 40%,#f8faff 72%,#fff 100%)"></div>
<div class="abs" style="left:921.66px;top:338.98px;width:31.6px;height:2.2px;background:#8cbcf0"></div>
<div class="abs" style="left:924.0600000000001px;top:340.28000000000003px;width:13.5px;height:1px;background:#5a6878"></div>
<svg style="left:922.66px;top:322.08px;" width="16.8" height="16.8" viewBox="0 0 16.8 16.8"><path d="M8.4 0 L16.8 16.8 L0 16.8Z" fill="#f7c300"/></svg>
<div class="t" style="left:927.46px;top:328.28000000000003px;font-size:10.6px;color:#151515;font-weight:normal;">1</div>
<div class="abs" style="left:955.0799999999999px;top:321.58px;width:32px;height:26.2px;border-radius:42% 42% 50% 50% / 58% 58% 42% 42%;background:radial-gradient(ellipse 60% 62% at 66% 46%,#cdd8f6 0%,#e2e8fa 40%,#f8faff 72%,#fff 100%)"></div>
<div class="abs" style="left:955.0799999999999px;top:338.98px;width:31.6px;height:2.2px;background:#8cbcf0"></div>
<div class="abs" style="left:957.48px;top:340.28000000000003px;width:13.5px;height:1px;background:#5a6878"></div>
<svg style="left:956.0799999999999px;top:322.08px;" width="16.8" height="16.8" viewBox="0 0 16.8 16.8"><path d="M8.4 0 L16.8 16.8 L0 16.8Z" fill="#f7c300"/></svg>
<div class="t" style="left:960.88px;top:328.28000000000003px;font-size:10.6px;color:#151515;font-weight:normal;">2</div>
<div class="abs" style="left:988.5px;top:321.58px;width:32px;height:26.2px;border-radius:42% 42% 50% 50% / 58% 58% 42% 42%;background:radial-gradient(ellipse 60% 62% at 66% 46%,#cdd8f6 0%,#e2e8fa 40%,#f8faff 72%,#fff 100%)"></div>
<div class="abs" style="left:988.5px;top:338.98px;width:31.6px;height:2.2px;background:#8cbcf0"></div>
<div class="abs" style="left:990.9000000000001px;top:340.28000000000003px;width:13.5px;height:1px;background:#5a6878"></div>
<svg style="left:989.5px;top:322.08px;" width="16.8" height="16.8" viewBox="0 0 16.8 16.8"><path d="M8.4 0 L16.8 16.8 L0 16.8Z" fill="#f7c300"/></svg>
<div class="t" style="left:994.3000000000001px;top:328.28000000000003px;font-size:10.6px;color:#151515;font-weight:normal;">1</div>
<div class="abs" style="left:1021.92px;top:321.58px;width:32px;height:26.2px;border-radius:42% 42% 50% 50% / 58% 58% 42% 42%;background:radial-gradient(ellipse 60% 62% at 66% 46%,#cdd8f6 0%,#e2e8fa 40%,#f8faff 72%,#fff 100%)"></div>
<div class="abs" style="left:1021.92px;top:338.98px;width:31.6px;height:2.2px;background:#8cbcf0"></div>
<div class="abs" style="left:1024.32px;top:340.28000000000003px;width:13.5px;height:1px;background:#5a6878"></div>
<svg style="left:1022.92px;top:322.08px;" width="16.8" height="16.8" viewBox="0 0 16.8 16.8"><path d="M8.4 0 L16.8 16.8 L0 16.8Z" fill="#f7c300"/></svg>
<div class="t" style="left:1027.72px;top:328.28000000000003px;font-size:10.6px;color:#151515;font-weight:normal;">1</div>
<div class="abs" style="left:654.3px;top:350.03999999999996px;width:32px;height:26.2px;border-radius:42% 42% 50% 50% / 58% 58% 42% 42%;background:radial-gradient(ellipse 60% 62% at 66% 46%,#cdd8f6 0%,#e2e8fa 40%,#f8faff 72%,#fff 100%)"></div>
<div class="abs" style="left:654.3px;top:367.44px;width:31.6px;height:2.2px;background:#8cbcf0"></div>
<div class="abs" style="left:656.7px;top:368.74px;width:13.5px;height:1px;background:#5a6878"></div>
<svg style="left:655.3px;top:350.53999999999996px;" width="16.8" height="16.8" viewBox="0 0 16.8 16.8"><path d="M8.4 0 L16.8 16.8 L0 16.8Z" fill="#f7c300"/></svg>
<div class="t" style="left:660.1px;top:356.74px;font-size:10.6px;color:#151515;font-weight:normal;">1</div>
<div class="abs" style="left:687.7199999999999px;top:350.03999999999996px;width:32px;height:26.2px;border-radius:42% 42% 50% 50% / 58% 58% 42% 42%;background:radial-gradient(ellipse 60% 62% at 66% 46%,#cdd8f6 0%,#e2e8fa 40%,#f8faff 72%,#fff 100%)"></div>
<div class="abs" style="left:687.7199999999999px;top:367.44px;width:31.6px;height:2.2px;background:#8cbcf0"></div>
<div class="abs" style="left:690.12px;top:368.74px;width:13.5px;height:1px;background:#5a6878"></div>
<svg style="left:688.7199999999999px;top:350.53999999999996px;" width="16.8" height="16.8" viewBox="0 0 16.8 16.8"><path d="M8.4 0 L16.8 16.8 L0 16.8Z" fill="#f7c300"/></svg>
<div class="t" style="left:693.52px;top:356.74px;font-size:10.6px;color:#151515;font-weight:normal;">1</div>
<div class="abs" style="left:721.14px;top:350.03999999999996px;width:32px;height:26.2px;border-radius:42% 42% 50% 50% / 58% 58% 42% 42%;background:radial-gradient(ellipse 60% 62% at 66% 46%,#cdd8f6 0%,#e2e8fa 40%,#f8faff 72%,#fff 100%)"></div>
<div class="abs" style="left:721.14px;top:367.44px;width:31.6px;height:2.2px;background:#8cbcf0"></div>
<div class="abs" style="left:723.5400000000001px;top:368.74px;width:13.5px;height:1px;background:#5a6878"></div>
<svg style="left:722.14px;top:350.53999999999996px;" width="16.8" height="16.8" viewBox="0 0 16.8 16.8"><path d="M8.4 0 L16.8 16.8 L0 16.8Z" fill="#f7c300"/></svg>
<div class="t" style="left:726.94px;top:356.74px;font-size:10.6px;color:#151515;font-weight:normal;">1</div>
<div class="abs" style="left:754.56px;top:350.03999999999996px;width:32px;height:26.2px;border-radius:42% 42% 50% 50% / 58% 58% 42% 42%;background:radial-gradient(ellipse 60% 62% at 66% 46%,#cdd8f6 0%,#e2e8fa 40%,#f8faff 72%,#fff 100%)"></div>
<div class="abs" style="left:754.56px;top:367.44px;width:31.6px;height:2.2px;background:#8cbcf0"></div>
<div class="abs" style="left:756.96px;top:368.74px;width:13.5px;height:1px;background:#5a6878"></div>
<svg style="left:755.56px;top:350.53999999999996px;" width="16.8" height="16.8" viewBox="0 0 16.8 16.8"><path d="M8.4 0 L16.8 16.8 L0 16.8Z" fill="#f7c300"/></svg>
<div class="t" style="left:760.36px;top:356.74px;font-size:10.6px;color:#151515;font-weight:normal;">2</div>
<div class="abs" style="left:787.98px;top:350.03999999999996px;width:32px;height:26.2px;border-radius:42% 42% 50% 50% / 58% 58% 42% 42%;background:radial-gradient(ellipse 60% 62% at 66% 46%,#cdd8f6 0%,#e2e8fa 40%,#f8faff 72%,#fff 100%)"></div>
<div class="abs" style="left:787.98px;top:367.44px;width:31.6px;height:2.2px;background:#8cbcf0"></div>
<div class="abs" style="left:790.3800000000001px;top:368.74px;width:13.5px;height:1px;background:#5a6878"></div>
<svg style="left:788.98px;top:350.53999999999996px;" width="16.8" height="16.8" viewBox="0 0 16.8 16.8"><path d="M8.4 0 L16.8 16.8 L0 16.8Z" fill="#f7c300"/></svg>
<div class="t" style="left:793.7800000000001px;top:356.74px;font-size:10.6px;color:#151515;font-weight:normal;">1</div>
<div class="abs" style="left:821.4px;top:350.03999999999996px;width:32px;height:26.2px;border-radius:42% 42% 50% 50% / 58% 58% 42% 42%;background:radial-gradient(ellipse 60% 62% at 66% 46%,#cdd8f6 0%,#e2e8fa 40%,#f8faff 72%,#fff 100%)"></div>
<div class="abs" style="left:821.4px;top:367.44px;width:31.6px;height:2.2px;background:#8cbcf0"></div>
<div class="abs" style="left:823.8000000000001px;top:368.74px;width:13.5px;height:1px;background:#5a6878"></div>
<svg style="left:822.4px;top:350.53999999999996px;" width="16.8" height="16.8" viewBox="0 0 16.8 16.8"><path d="M8.4 0 L16.8 16.8 L0 16.8Z" fill="#f7c300"/></svg>
<div class="t" style="left:827.2px;top:356.74px;font-size:10.6px;color:#151515;font-weight:normal;">1</div>
<div class="abs" style="left:854.8199999999999px;top:350.03999999999996px;width:32px;height:26.2px;border-radius:42% 42% 50% 50% / 58% 58% 42% 42%;background:radial-gradient(ellipse 60% 62% at 66% 46%,#cdd8f6 0%,#e2e8fa 40%,#f8faff 72%,#fff 100%)"></div>
<div class="abs" style="left:854.8199999999999px;top:367.44px;width:31.6px;height:2.2px;background:#8cbcf0"></div>
<div class="abs" style="left:857.22px;top:368.74px;width:13.5px;height:1px;background:#5a6878"></div>
<svg style="left:855.8199999999999px;top:350.53999999999996px;" width="16.8" height="16.8" viewBox="0 0 16.8 16.8"><path d="M8.4 0 L16.8 16.8 L0 16.8Z" fill="#f7c300"/></svg>
<div class="t" style="left:860.62px;top:356.74px;font-size:10.6px;color:#151515;font-weight:normal;">1</div>
<div class="abs" style="left:888.24px;top:350.03999999999996px;width:32px;height:26.2px;border-radius:42% 42% 50% 50% / 58% 58% 42% 42%;background:radial-gradient(ellipse 60% 62% at 66% 46%,#cdd8f6 0%,#e2e8fa 40%,#f8faff 72%,#fff 100%)"></div>
<div class="abs" style="left:888.24px;top:367.44px;width:31.6px;height:2.2px;background:#8cbcf0"></div>
<div class="abs" style="left:890.6400000000001px;top:368.74px;width:13.5px;height:1px;background:#5a6878"></div>
<svg style="left:889.24px;top:350.53999999999996px;" width="16.8" height="16.8" viewBox="0 0 16.8 16.8"><path d="M8.4 0 L16.8 16.8 L0 16.8Z" fill="#f7c300"/></svg>
<div class="t" style="left:894.0400000000001px;top:356.74px;font-size:10.6px;color:#151515;font-weight:normal;">1</div>
<div class="abs" style="left:921.66px;top:350.03999999999996px;width:32px;height:26.2px;border-radius:42% 42% 50% 50% / 58% 58% 42% 42%;background:radial-gradient(ellipse 60% 62% at 66% 46%,#cdd8f6 0%,#e2e8fa 40%,#f8faff 72%,#fff 100%)"></div>
<div class="abs" style="left:921.66px;top:367.44px;width:31.6px;height:2.2px;background:#8cbcf0"></div>
<div class="abs" style="left:924.0600000000001px;top:368.74px;width:13.5px;height:1px;background:#5a6878"></div>
<svg style="left:922.66px;top:350.53999999999996px;" width="16.8" height="16.8" viewBox="0 0 16.8 16.8"><path d="M8.4 0 L16.8 16.8 L0 16.8Z" fill="#f7c300"/></svg>
<div class="t" style="left:927.46px;top:356.74px;font-size:10.6px;color:#151515;font-weight:normal;">2</div>
<div class="abs" style="left:955.0799999999999px;top:350.03999999999996px;width:32px;height:26.2px;border-radius:42% 42% 50% 50% / 58% 58% 42% 42%;background:radial-gradient(ellipse 60% 62% at 66% 46%,#cdd8f6 0%,#e2e8fa 40%,#f8faff 72%,#fff 100%)"></div>
<div class="abs" style="left:955.0799999999999px;top:367.44px;width:31.6px;height:2.2px;background:#8cbcf0"></div>
<div class="abs" style="left:957.48px;top:368.74px;width:13.5px;height:1px;background:#5a6878"></div>
<svg style="left:956.0799999999999px;top:350.53999999999996px;" width="16.8" height="16.8" viewBox="0 0 16.8 16.8"><path d="M8.4 0 L16.8 16.8 L0 16.8Z" fill="#f7c300"/></svg>
<div class="t" style="left:960.88px;top:356.74px;font-size:10.6px;color:#151515;font-weight:normal;">1</div>
<div class="abs" style="left:988.5px;top:350.03999999999996px;width:32px;height:26.2px;border-radius:42% 42% 50% 50% / 58% 58% 42% 42%;background:radial-gradient(ellipse 60% 62% at 66% 46%,#cdd8f6 0%,#e2e8fa 40%,#f8faff 72%,#fff 100%)"></div>
<div class="abs" style="left:988.5px;top:367.44px;width:31.6px;height:2.2px;background:#8cbcf0"></div>
<div class="abs" style="left:990.9000000000001px;top:368.74px;width:13.5px;height:1px;background:#5a6878"></div>
<svg style="left:989.5px;top:350.53999999999996px;" width="16.8" height="16.8" viewBox="0 0 16.8 16.8"><path d="M8.4 0 L16.8 16.8 L0 16.8Z" fill="#f7c300"/></svg>
<div class="t" style="left:994.3000000000001px;top:356.74px;font-size:10.6px;color:#151515;font-weight:normal;">1</div>
<div class="abs" style="left:1021.92px;top:350.03999999999996px;width:32px;height:26.2px;border-radius:42% 42% 50% 50% / 58% 58% 42% 42%;background:radial-gradient(ellipse 60% 62% at 66% 46%,#cdd8f6 0%,#e2e8fa 40%,#f8faff 72%,#fff 100%)"></div>
<div class="abs" style="left:1021.92px;top:367.44px;width:31.6px;height:2.2px;background:#8cbcf0"></div>
<div class="abs" style="left:1024.32px;top:368.74px;width:13.5px;height:1px;background:#5a6878"></div>
<svg style="left:1022.92px;top:350.53999999999996px;" width="16.8" height="16.8" viewBox="0 0 16.8 16.8"><path d="M8.4 0 L16.8 16.8 L0 16.8Z" fill="#f7c300"/></svg>
<div class="t" style="left:1027.72px;top:356.74px;font-size:10.6px;color:#151515;font-weight:normal;">1</div>
<div class="abs" style="left:654.3px;top:378.5px;width:32px;height:26.2px;border-radius:42% 42% 50% 50% / 58% 58% 42% 42%;background:radial-gradient(ellipse 60% 62% at 66% 46%,#cdd8f6 0%,#e2e8fa 40%,#f8faff 72%,#fff 100%)"></div>
<div class="abs" style="left:654.3px;top:395.90000000000003px;width:31.6px;height:2.2px;background:#8cbcf0"></div>
<div class="abs" style="left:656.7px;top:397.20000000000005px;width:13.5px;height:1px;background:#5a6878"></div>
<svg style="left:655.3px;top:379.0px;" width="16.8" height="16.8" viewBox="0 0 16.8 16.8"><path d="M8.4 0 L16.8 16.8 L0 16.8Z" fill="#f7c300"/></svg>
<div class="t" style="left:660.1px;top:385.20000000000005px;font-size:10.6px;color:#151515;font-weight:normal;">1</div>
<div class="abs" style="left:687.7199999999999px;top:378.5px;width:32px;height:26.2px;border-radius:42% 42% 50% 50% / 58% 58% 42% 42%;background:radial-gradient(ellipse 60% 62% at 66% 46%,#cdd8f6 0%,#e2e8fa 40%,#f8faff 72%,#fff 100%)"></div>
<div class="abs" style="left:687.7199999999999px;top:395.90000000000003px;width:31.6px;height:2.2px;background:#8cbcf0"></div>
<div class="abs" style="left:690.12px;top:397.20000000000005px;width:13.5px;height:1px;background:#5a6878"></div>
<svg style="left:688.7199999999999px;top:379.0px;" width="16.8" height="16.8" viewBox="0 0 16.8 16.8"><path d="M8.4 0 L16.8 16.8 L0 16.8Z" fill="#f7c300"/></svg>
<div class="t" style="left:693.52px;top:385.20000000000005px;font-size:10.6px;color:#151515;font-weight:normal;">1</div>
<div class="abs" style="left:721.14px;top:378.5px;width:32px;height:26.2px;border-radius:42% 42% 50% 50% / 58% 58% 42% 42%;background:radial-gradient(ellipse 60% 62% at 66% 46%,#cdd8f6 0%,#e2e8fa 40%,#f8faff 72%,#fff 100%)"></div>
<div class="abs" style="left:721.14px;top:395.90000000000003px;width:31.6px;height:2.2px;background:#8cbcf0"></div>
<div class="abs" style="left:723.5400000000001px;top:397.20000000000005px;width:13.5px;height:1px;background:#5a6878"></div>
<svg style="left:722.14px;top:379.0px;" width="16.8" height="16.8" viewBox="0 0 16.8 16.8"><path d="M8.4 0 L16.8 16.8 L0 16.8Z" fill="#f7c300"/></svg>
<div class="t" style="left:726.94px;top:385.20000000000005px;font-size:10.6px;color:#151515;font-weight:normal;">1</div>
<div class="abs" style="left:754.56px;top:378.5px;width:32px;height:26.2px;border-radius:42% 42% 50% 50% / 58% 58% 42% 42%;background:radial-gradient(ellipse 60% 62% at 66% 46%,#cdd8f6 0%,#e2e8fa 40%,#f8faff 72%,#fff 100%)"></div>
<div class="abs" style="left:754.56px;top:395.90000000000003px;width:31.6px;height:2.2px;background:#8cbcf0"></div>
<div class="abs" style="left:756.96px;top:397.20000000000005px;width:13.5px;height:1px;background:#5a6878"></div>
<svg style="left:755.56px;top:379.0px;" width="16.8" height="16.8" viewBox="0 0 16.8 16.8"><path d="M8.4 0 L16.8 16.8 L0 16.8Z" fill="#f7c300"/></svg>
<div class="t" style="left:760.36px;top:385.20000000000005px;font-size:10.6px;color:#151515;font-weight:normal;">1</div>
<div class="abs" style="left:787.98px;top:378.5px;width:32px;height:26.2px;border-radius:42% 42% 50% 50% / 58% 58% 42% 42%;background:radial-gradient(ellipse 60% 62% at 66% 46%,#cdd8f6 0%,#e2e8fa 40%,#f8faff 72%,#fff 100%)"></div>
<div class="abs" style="left:787.98px;top:395.90000000000003px;width:31.6px;height:2.2px;background:#8cbcf0"></div>
<div class="abs" style="left:790.3800000000001px;top:397.20000000000005px;width:13.5px;height:1px;background:#5a6878"></div>
<svg style="left:788.98px;top:379.0px;" width="16.8" height="16.8" viewBox="0 0 16.8 16.8"><path d="M8.4 0 L16.8 16.8 L0 16.8Z" fill="#f7c300"/></svg>
<div class="t" style="left:793.7800000000001px;top:385.20000000000005px;font-size:10.6px;color:#151515;font-weight:normal;">1</div>
<div class="abs" style="left:821.4px;top:378.5px;width:32px;height:26.2px;border-radius:42% 42% 50% 50% / 58% 58% 42% 42%;background:radial-gradient(ellipse 60% 62% at 66% 46%,#cdd8f6 0%,#e2e8fa 40%,#f8faff 72%,#fff 100%)"></div>
<div class="abs" style="left:821.4px;top:395.90000000000003px;width:31.6px;height:2.2px;background:#8cbcf0"></div>
<div class="abs" style="left:823.8000000000001px;top:397.20000000000005px;width:13.5px;height:1px;background:#5a6878"></div>
<svg style="left:822.4px;top:379.0px;" width="16.8" height="16.8" viewBox="0 0 16.8 16.8"><path d="M8.4 0 L16.8 16.8 L0 16.8Z" fill="#f7c300"/></svg>
<div class="t" style="left:827.2px;top:385.20000000000005px;font-size:10.6px;color:#151515;font-weight:normal;">2</div>
<div class="abs" style="left:854.8199999999999px;top:378.5px;width:32px;height:26.2px;border-radius:42% 42% 50% 50% / 58% 58% 42% 42%;background:radial-gradient(ellipse 60% 62% at 66% 46%,#cdd8f6 0%,#e2e8fa 40%,#f8faff 72%,#fff 100%)"></div>
<div class="abs" style="left:854.8199999999999px;top:395.90000000000003px;width:31.6px;height:2.2px;background:#8cbcf0"></div>
<div class="abs" style="left:857.22px;top:397.20000000000005px;width:13.5px;height:1px;background:#5a6878"></div>
<svg style="left:855.8199999999999px;top:379.0px;" width="16.8" height="16.8" viewBox="0 0 16.8 16.8"><path d="M8.4 0 L16.8 16.8 L0 16.8Z" fill="#f7c300"/></svg>
<div class="t" style="left:860.62px;top:385.20000000000005px;font-size:10.6px;color:#151515;font-weight:normal;">2</div>
<div class="abs" style="left:888.24px;top:378.5px;width:32px;height:26.2px;border-radius:42% 42% 50% 50% / 58% 58% 42% 42%;background:radial-gradient(ellipse 60% 62% at 66% 46%,#cdd8f6 0%,#e2e8fa 40%,#f8faff 72%,#fff 100%)"></div>
<div class="abs" style="left:888.24px;top:395.90000000000003px;width:31.6px;height:2.2px;background:#8cbcf0"></div>
<div class="abs" style="left:890.6400000000001px;top:397.20000000000005px;width:13.5px;height:1px;background:#5a6878"></div>
<svg style="left:889.24px;top:379.0px;" width="16.8" height="16.8" viewBox="0 0 16.8 16.8"><path d="M8.4 0 L16.8 16.8 L0 16.8Z" fill="#f7c300"/></svg>
<div class="t" style="left:894.0400000000001px;top:385.20000000000005px;font-size:10.6px;color:#151515;font-weight:normal;">1</div>
<div class="abs" style="left:921.66px;top:378.5px;width:32px;height:26.2px;border-radius:42% 42% 50% 50% / 58% 58% 42% 42%;background:radial-gradient(ellipse 60% 62% at 66% 46%,#cdd8f6 0%,#e2e8fa 40%,#f8faff 72%,#fff 100%)"></div>
<div class="abs" style="left:921.66px;top:395.90000000000003px;width:31.6px;height:2.2px;background:#8cbcf0"></div>
<div class="abs" style="left:924.0600000000001px;top:397.20000000000005px;width:13.5px;height:1px;background:#5a6878"></div>
<svg style="left:922.66px;top:379.0px;" width="16.8" height="16.8" viewBox="0 0 16.8 16.8"><path d="M8.4 0 L16.8 16.8 L0 16.8Z" fill="#f7c300"/></svg>
<div class="t" style="left:927.46px;top:385.20000000000005px;font-size:10.6px;color:#151515;font-weight:normal;">1</div>
<div class="abs" style="left:955.0799999999999px;top:378.5px;width:32px;height:26.2px;border-radius:42% 42% 50% 50% / 58% 58% 42% 42%;background:radial-gradient(ellipse 60% 62% at 66% 46%,#cdd8f6 0%,#e2e8fa 40%,#f8faff 72%,#fff 100%)"></div>
<div class="abs" style="left:955.0799999999999px;top:395.90000000000003px;width:31.6px;height:2.2px;background:#8cbcf0"></div>
<div class="abs" style="left:957.48px;top:397.20000000000005px;width:13.5px;height:1px;background:#5a6878"></div>
<svg style="left:956.0799999999999px;top:379.0px;" width="16.8" height="16.8" viewBox="0 0 16.8 16.8"><path d="M8.4 0 L16.8 16.8 L0 16.8Z" fill="#f7c300"/></svg>
<div class="t" style="left:960.88px;top:385.20000000000005px;font-size:10.6px;color:#151515;font-weight:normal;">1</div>
<div class="abs" style="left:988.5px;top:378.5px;width:32px;height:26.2px;border-radius:42% 42% 50% 50% / 58% 58% 42% 42%;background:radial-gradient(ellipse 60% 62% at 66% 46%,#cdd8f6 0%,#e2e8fa 40%,#f8faff 72%,#fff 100%)"></div>
<div class="abs" style="left:988.5px;top:395.90000000000003px;width:31.6px;height:2.2px;background:#8cbcf0"></div>
<div class="abs" style="left:990.9000000000001px;top:397.20000000000005px;width:13.5px;height:1px;background:#5a6878"></div>
<svg style="left:989.5px;top:379.0px;" width="16.8" height="16.8" viewBox="0 0 16.8 16.8"><path d="M8.4 0 L16.8 16.8 L0 16.8Z" fill="#f7c300"/></svg>
<div class="t" style="left:994.3000000000001px;top:385.20000000000005px;font-size:10.6px;color:#151515;font-weight:normal;">1</div>
<div class="abs" style="left:1021.92px;top:378.5px;width:32px;height:26.2px;border-radius:42% 42% 50% 50% / 58% 58% 42% 42%;background:radial-gradient(ellipse 60% 62% at 66% 46%,#cdd8f6 0%,#e2e8fa 40%,#f8faff 72%,#fff 100%)"></div>
<div class="abs" style="left:1021.92px;top:395.90000000000003px;width:31.6px;height:2.2px;background:#8cbcf0"></div>
<div class="abs" style="left:1024.32px;top:397.20000000000005px;width:13.5px;height:1px;background:#5a6878"></div>
<svg style="left:1022.92px;top:379.0px;" width="16.8" height="16.8" viewBox="0 0 16.8 16.8"><path d="M8.4 0 L16.8 16.8 L0 16.8Z" fill="#f7c300"/></svg>
<div class="t" style="left:1027.72px;top:385.20000000000005px;font-size:10.6px;color:#151515;font-weight:normal;">1</div>
<div class="abs" style="left:654.3px;top:406.96px;width:32px;height:26.2px;border-radius:42% 42% 50% 50% / 58% 58% 42% 42%;background:radial-gradient(ellipse 60% 62% at 66% 46%,#cdd8f6 0%,#e2e8fa 40%,#f8faff 72%,#fff 100%)"></div>
<div class="abs" style="left:654.3px;top:424.36px;width:31.6px;height:2.2px;background:#8cbcf0"></div>
<div class="abs" style="left:656.7px;top:425.66px;width:13.5px;height:1px;background:#5a6878"></div>
<svg style="left:655.3px;top:407.46px;" width="16.8" height="16.8" viewBox="0 0 16.8 16.8"><path d="M8.4 0 L16.8 16.8 L0 16.8Z" fill="#f7c300"/></svg>
<div class="t" style="left:660.1px;top:413.66px;font-size:10.6px;color:#151515;font-weight:normal;">1</div>
<div class="abs" style="left:687.7199999999999px;top:406.96px;width:32px;height:26.2px;border-radius:42% 42% 50% 50% / 58% 58% 42% 42%;background:radial-gradient(ellipse 60% 62% at 66% 46%,#cdd8f6 0%,#e2e8fa 40%,#f8faff 72%,#fff 100%)"></div>
<div class="abs" style="left:687.7199999999999px;top:424.36px;width:31.6px;height:2.2px;background:#8cbcf0"></div>
<div class="abs" style="left:690.12px;top:425.66px;width:13.5px;height:1px;background:#5a6878"></div>
<svg style="left:688.7199999999999px;top:407.46px;" width="16.8" height="16.8" viewBox="0 0 16.8 16.8"><path d="M8.4 0 L16.8 16.8 L0 16.8Z" fill="#f7c300"/></svg>
<div class="t" style="left:693.52px;top:413.66px;font-size:10.6px;color:#151515;font-weight:normal;">2</div>
<div class="abs" style="left:721.14px;top:406.96px;width:32px;height:26.2px;border-radius:42% 42% 50% 50% / 58% 58% 42% 42%;background:radial-gradient(ellipse 60% 62% at 66% 46%,#cdd8f6 0%,#e2e8fa 40%,#f8faff 72%,#fff 100%)"></div>
<div class="abs" style="left:721.14px;top:424.36px;width:31.6px;height:2.2px;background:#8cbcf0"></div>
<div class="abs" style="left:723.5400000000001px;top:425.66px;width:13.5px;height:1px;background:#5a6878"></div>
<svg style="left:722.14px;top:407.46px;" width="16.8" height="16.8" viewBox="0 0 16.8 16.8"><path d="M8.4 0 L16.8 16.8 L0 16.8Z" fill="#f7c300"/></svg>
<div class="t" style="left:726.94px;top:413.66px;font-size:10.6px;color:#151515;font-weight:normal;">1</div>
<div class="abs" style="left:754.56px;top:406.96px;width:32px;height:26.2px;border-radius:42% 42% 50% 50% / 58% 58% 42% 42%;background:radial-gradient(ellipse 60% 62% at 66% 46%,#cdd8f6 0%,#e2e8fa 40%,#f8faff 72%,#fff 100%)"></div>
<div class="abs" style="left:754.56px;top:424.36px;width:31.6px;height:2.2px;background:#8cbcf0"></div>
<div class="abs" style="left:756.96px;top:425.66px;width:13.5px;height:1px;background:#5a6878"></div>
<svg style="left:755.56px;top:407.46px;" width="16.8" height="16.8" viewBox="0 0 16.8 16.8"><path d="M8.4 0 L16.8 16.8 L0 16.8Z" fill="#f7c300"/></svg>
<div class="t" style="left:760.36px;top:413.66px;font-size:10.6px;color:#151515;font-weight:normal;">1</div>
<div class="abs" style="left:787.98px;top:406.96px;width:32px;height:26.2px;border-radius:42% 42% 50% 50% / 58% 58% 42% 42%;background:radial-gradient(ellipse 60% 62% at 66% 46%,#cdd8f6 0%,#e2e8fa 40%,#f8faff 72%,#fff 100%)"></div>
<div class="abs" style="left:787.98px;top:424.36px;width:31.6px;height:2.2px;background:#8cbcf0"></div>
<div class="abs" style="left:790.3800000000001px;top:425.66px;width:13.5px;height:1px;background:#5a6878"></div>
<svg style="left:788.98px;top:407.46px;" width="16.8" height="16.8" viewBox="0 0 16.8 16.8"><path d="M8.4 0 L16.8 16.8 L0 16.8Z" fill="#f7c300"/></svg>
<div class="t" style="left:793.7800000000001px;top:413.66px;font-size:10.6px;color:#151515;font-weight:normal;">1</div>
<div class="abs" style="left:821.4px;top:406.96px;width:32px;height:26.2px;border-radius:42% 42% 50% 50% / 58% 58% 42% 42%;background:radial-gradient(ellipse 60% 62% at 66% 46%,#cdd8f6 0%,#e2e8fa 40%,#f8faff 72%,#fff 100%)"></div>
<div class="abs" style="left:821.4px;top:424.36px;width:31.6px;height:2.2px;background:#8cbcf0"></div>
<div class="abs" style="left:823.8000000000001px;top:425.66px;width:13.5px;height:1px;background:#5a6878"></div>
<svg style="left:822.4px;top:407.46px;" width="16.8" height="16.8" viewBox="0 0 16.8 16.8"><path d="M8.4 0 L16.8 16.8 L0 16.8Z" fill="#f7c300"/></svg>
<div class="t" style="left:827.2px;top:413.66px;font-size:10.6px;color:#151515;font-weight:normal;">1</div>
<div class="abs" style="left:854.8199999999999px;top:406.96px;width:32px;height:26.2px;border-radius:42% 42% 50% 50% / 58% 58% 42% 42%;background:radial-gradient(ellipse 60% 62% at 66% 46%,#cdd8f6 0%,#e2e8fa 40%,#f8faff 72%,#fff 100%)"></div>
<div class="abs" style="left:854.8199999999999px;top:424.36px;width:31.6px;height:2.2px;background:#8cbcf0"></div>
<div class="abs" style="left:857.22px;top:425.66px;width:13.5px;height:1px;background:#5a6878"></div>
<svg style="left:855.8199999999999px;top:407.46px;" width="16.8" height="16.8" viewBox="0 0 16.8 16.8"><path d="M8.4 0 L16.8 16.8 L0 16.8Z" fill="#f7c300"/></svg>
<div class="t" style="left:860.62px;top:413.66px;font-size:10.6px;color:#151515;font-weight:normal;">1</div>
<div class="abs" style="left:888.24px;top:406.96px;width:32px;height:26.2px;border-radius:42% 42% 50% 50% / 58% 58% 42% 42%;background:radial-gradient(ellipse 60% 62% at 66% 46%,#cdd8f6 0%,#e2e8fa 40%,#f8faff 72%,#fff 100%)"></div>
<div class="abs" style="left:888.24px;top:424.36px;width:31.6px;height:2.2px;background:#8cbcf0"></div>
<div class="abs" style="left:890.6400000000001px;top:425.66px;width:13.5px;height:1px;background:#5a6878"></div>
<svg style="left:889.24px;top:407.46px;" width="16.8" height="16.8" viewBox="0 0 16.8 16.8"><path d="M8.4 0 L16.8 16.8 L0 16.8Z" fill="#f7c300"/></svg>
<div class="t" style="left:894.0400000000001px;top:413.66px;font-size:10.6px;color:#151515;font-weight:normal;">1</div>
<div class="abs" style="left:921.66px;top:406.96px;width:32px;height:26.2px;border-radius:42% 42% 50% 50% / 58% 58% 42% 42%;background:radial-gradient(ellipse 60% 62% at 66% 46%,#cdd8f6 0%,#e2e8fa 40%,#f8faff 72%,#fff 100%)"></div>
<div class="abs" style="left:921.66px;top:424.36px;width:31.6px;height:2.2px;background:#8cbcf0"></div>
<div class="abs" style="left:924.0600000000001px;top:425.66px;width:13.5px;height:1px;background:#5a6878"></div>
<svg style="left:922.66px;top:407.46px;" width="16.8" height="16.8" viewBox="0 0 16.8 16.8"><path d="M8.4 0 L16.8 16.8 L0 16.8Z" fill="#f7c300"/></svg>
<div class="t" style="left:927.46px;top:413.66px;font-size:10.6px;color:#151515;font-weight:normal;">2</div>
<div class="abs" style="left:955.0799999999999px;top:406.96px;width:32px;height:26.2px;border-radius:42% 42% 50% 50% / 58% 58% 42% 42%;background:radial-gradient(ellipse 60% 62% at 66% 46%,#cdd8f6 0%,#e2e8fa 40%,#f8faff 72%,#fff 100%)"></div>
<div class="abs" style="left:955.0799999999999px;top:424.36px;width:31.6px;height:2.2px;background:#8cbcf0"></div>
<div class="abs" style="left:957.48px;top:425.66px;width:13.5px;height:1px;background:#5a6878"></div>
<svg style="left:956.0799999999999px;top:407.46px;" width="16.8" height="16.8" viewBox="0 0 16.8 16.8"><path d="M8.4 0 L16.8 16.8 L0 16.8Z" fill="#f7c300"/></svg>
<div class="t" style="left:960.88px;top:413.66px;font-size:10.6px;color:#151515;font-weight:normal;">2</div>
<div class="abs" style="left:988.5px;top:406.96px;width:32px;height:26.2px;border-radius:42% 42% 50% 50% / 58% 58% 42% 42%;background:radial-gradient(ellipse 60% 62% at 66% 46%,#cdd8f6 0%,#e2e8fa 40%,#f8faff 72%,#fff 100%)"></div>
<div class="abs" style="left:988.5px;top:424.36px;width:31.6px;height:2.2px;background:#8cbcf0"></div>
<div class="abs" style="left:990.9000000000001px;top:425.66px;width:13.5px;height:1px;background:#5a6878"></div>
<svg style="left:989.5px;top:407.46px;" width="16.8" height="16.8" viewBox="0 0 16.8 16.8"><path d="M8.4 0 L16.8 16.8 L0 16.8Z" fill="#f7c300"/></svg>
<div class="t" style="left:994.3000000000001px;top:413.66px;font-size:10.6px;color:#151515;font-weight:normal;">1</div>
<div class="abs" style="left:1021.92px;top:406.96px;width:32px;height:26.2px;border-radius:42% 42% 50% 50% / 58% 58% 42% 42%;background:radial-gradient(ellipse 60% 62% at 66% 46%,#cdd8f6 0%,#e2e8fa 40%,#f8faff 72%,#fff 100%)"></div>
<div class="abs" style="left:1021.92px;top:424.36px;width:31.6px;height:2.2px;background:#8cbcf0"></div>
<div class="abs" style="left:1024.32px;top:425.66px;width:13.5px;height:1px;background:#5a6878"></div>
<svg style="left:1022.92px;top:407.46px;" width="16.8" height="16.8" viewBox="0 0 16.8 16.8"><path d="M8.4 0 L16.8 16.8 L0 16.8Z" fill="#f7c300"/></svg>
<div class="t" style="left:1027.72px;top:413.66px;font-size:10.6px;color:#151515;font-weight:normal;">1</div>
<div class="abs" style="left:654.3px;top:435.41999999999996px;width:32px;height:26.2px;border-radius:42% 42% 50% 50% / 58% 58% 42% 42%;background:radial-gradient(ellipse 60% 62% at 66% 46%,#cdd8f6 0%,#e2e8fa 40%,#f8faff 72%,#fff 100%)"></div>
<div class="abs" style="left:654.3px;top:452.82px;width:31.6px;height:2.2px;background:#8cbcf0"></div>
<div class="abs" style="left:656.7px;top:454.12px;width:13.5px;height:1px;background:#5a6878"></div>
<svg style="left:655.3px;top:435.91999999999996px;" width="16.8" height="16.8" viewBox="0 0 16.8 16.8"><path d="M8.4 0 L16.8 16.8 L0 16.8Z" fill="#f7c300"/></svg>
<div class="t" style="left:660.1px;top:442.12px;font-size:10.6px;color:#151515;font-weight:normal;">2</div>
<div class="abs" style="left:687.7199999999999px;top:435.41999999999996px;width:32px;height:26.2px;border-radius:42% 42% 50% 50% / 58% 58% 42% 42%;background:radial-gradient(ellipse 60% 62% at 66% 46%,#cdd8f6 0%,#e2e8fa 40%,#f8faff 72%,#fff 100%)"></div>
<div class="abs" style="left:687.7199999999999px;top:452.82px;width:31.6px;height:2.2px;background:#8cbcf0"></div>
<div class="abs" style="left:690.12px;top:454.12px;width:13.5px;height:1px;background:#5a6878"></div>
<svg style="left:688.7199999999999px;top:435.91999999999996px;" width="16.8" height="16.8" viewBox="0 0 16.8 16.8"><path d="M8.4 0 L16.8 16.8 L0 16.8Z" fill="#f7c300"/></svg>
<div class="t" style="left:693.52px;top:442.12px;font-size:10.6px;color:#151515;font-weight:normal;">1</div>
<div class="abs" style="left:721.14px;top:435.41999999999996px;width:32px;height:26.2px;border-radius:42% 42% 50% 50% / 58% 58% 42% 42%;background:radial-gradient(ellipse 60% 62% at 66% 46%,#cdd8f6 0%,#e2e8fa 40%,#f8faff 72%,#fff 100%)"></div>
<div class="abs" style="left:721.14px;top:452.82px;width:31.6px;height:2.2px;background:#8cbcf0"></div>
<div class="abs" style="left:723.5400000000001px;top:454.12px;width:13.5px;height:1px;background:#5a6878"></div>
<svg style="left:722.14px;top:435.91999999999996px;" width="16.8" height="16.8" viewBox="0 0 16.8 16.8"><path d="M8.4 0 L16.8 16.8 L0 16.8Z" fill="#f7c300"/></svg>
<div class="t" style="left:726.94px;top:442.12px;font-size:10.6px;color:#151515;font-weight:normal;">2</div>
<div class="abs" style="left:754.56px;top:435.41999999999996px;width:32px;height:26.2px;border-radius:42% 42% 50% 50% / 58% 58% 42% 42%;background:radial-gradient(ellipse 60% 62% at 66% 46%,#cdd8f6 0%,#e2e8fa 40%,#f8faff 72%,#fff 100%)"></div>
<div class="abs" style="left:754.56px;top:452.82px;width:31.6px;height:2.2px;background:#8cbcf0"></div>
<div class="abs" style="left:756.96px;top:454.12px;width:13.5px;height:1px;background:#5a6878"></div>
<svg style="left:755.56px;top:435.91999999999996px;" width="16.8" height="16.8" viewBox="0 0 16.8 16.8"><path d="M8.4 0 L16.8 16.8 L0 16.8Z" fill="#f7c300"/></svg>
<div class="t" style="left:760.36px;top:442.12px;font-size:10.6px;color:#151515;font-weight:normal;">1</div>
<div class="abs" style="left:787.98px;top:435.41999999999996px;width:32px;height:26.2px;border-radius:42% 42% 50% 50% / 58% 58% 42% 42%;background:radial-gradient(ellipse 60% 62% at 66% 46%,#cdd8f6 0%,#e2e8fa 40%,#f8faff 72%,#fff 100%)"></div>
<div class="abs" style="left:787.98px;top:452.82px;width:31.6px;height:2.2px;background:#8cbcf0"></div>
<div class="abs" style="left:790.3800000000001px;top:454.12px;width:13.5px;height:1px;background:#5a6878"></div>
<svg style="left:788.98px;top:435.91999999999996px;" width="16.8" height="16.8" viewBox="0 0 16.8 16.8"><path d="M8.4 0 L16.8 16.8 L0 16.8Z" fill="#f7c300"/></svg>
<div class="t" style="left:793.7800000000001px;top:442.12px;font-size:10.6px;color:#151515;font-weight:normal;">1</div>
<div class="abs" style="left:821.4px;top:435.41999999999996px;width:32px;height:26.2px;border-radius:42% 42% 50% 50% / 58% 58% 42% 42%;background:radial-gradient(ellipse 60% 62% at 66% 46%,#cdd8f6 0%,#e2e8fa 40%,#f8faff 72%,#fff 100%)"></div>
<div class="abs" style="left:821.4px;top:452.82px;width:31.6px;height:2.2px;background:#8cbcf0"></div>
<div class="abs" style="left:823.8000000000001px;top:454.12px;width:13.5px;height:1px;background:#5a6878"></div>
<svg style="left:822.4px;top:435.91999999999996px;" width="16.8" height="16.8" viewBox="0 0 16.8 16.8"><path d="M8.4 0 L16.8 16.8 L0 16.8Z" fill="#f7c300"/></svg>
<div class="t" style="left:827.2px;top:442.12px;font-size:10.6px;color:#151515;font-weight:normal;">1</div>
<div class="abs" style="left:854.8199999999999px;top:435.41999999999996px;width:32px;height:26.2px;border-radius:42% 42% 50% 50% / 58% 58% 42% 42%;background:radial-gradient(ellipse 60% 62% at 66% 46%,#cdd8f6 0%,#e2e8fa 40%,#f8faff 72%,#fff 100%)"></div>
<div class="abs" style="left:854.8199999999999px;top:452.82px;width:31.6px;height:2.2px;background:#8cbcf0"></div>
<div class="abs" style="left:857.22px;top:454.12px;width:13.5px;height:1px;background:#5a6878"></div>
<svg style="left:855.8199999999999px;top:435.91999999999996px;" width="16.8" height="16.8" viewBox="0 0 16.8 16.8"><path d="M8.4 0 L16.8 16.8 L0 16.8Z" fill="#f7c300"/></svg>
<div class="t" style="left:860.62px;top:442.12px;font-size:10.6px;color:#151515;font-weight:normal;">1</div>
<div class="abs" style="left:888.24px;top:435.41999999999996px;width:32px;height:26.2px;border-radius:42% 42% 50% 50% / 58% 58% 42% 42%;background:radial-gradient(ellipse 60% 62% at 66% 46%,#cdd8f6 0%,#e2e8fa 40%,#f8faff 72%,#fff 100%)"></div>
<div class="abs" style="left:888.24px;top:452.82px;width:31.6px;height:2.2px;background:#8cbcf0"></div>
<div class="abs" style="left:890.6400000000001px;top:454.12px;width:13.5px;height:1px;background:#5a6878"></div>
<svg style="left:889.24px;top:435.91999999999996px;" width="16.8" height="16.8" viewBox="0 0 16.8 16.8"><path d="M8.4 0 L16.8 16.8 L0 16.8Z" fill="#f7c300"/></svg>
<div class="t" style="left:894.0400000000001px;top:442.12px;font-size:10.6px;color:#151515;font-weight:normal;">1</div>
<div class="abs" style="left:921.66px;top:435.41999999999996px;width:32px;height:26.2px;border-radius:42% 42% 50% 50% / 58% 58% 42% 42%;background:radial-gradient(ellipse 60% 62% at 66% 46%,#cdd8f6 0%,#e2e8fa 40%,#f8faff 72%,#fff 100%)"></div>
<div class="abs" style="left:921.66px;top:452.82px;width:31.6px;height:2.2px;background:#8cbcf0"></div>
<div class="abs" style="left:924.0600000000001px;top:454.12px;width:13.5px;height:1px;background:#5a6878"></div>
<svg style="left:922.66px;top:435.91999999999996px;" width="16.8" height="16.8" viewBox="0 0 16.8 16.8"><path d="M8.4 0 L16.8 16.8 L0 16.8Z" fill="#f7c300"/></svg>
<div class="t" style="left:927.46px;top:442.12px;font-size:10.6px;color:#151515;font-weight:normal;">1</div>
<div class="abs" style="left:955.0799999999999px;top:435.41999999999996px;width:32px;height:26.2px;border-radius:42% 42% 50% 50% / 58% 58% 42% 42%;background:radial-gradient(ellipse 60% 62% at 66% 46%,#cdd8f6 0%,#e2e8fa 40%,#f8faff 72%,#fff 100%)"></div>
<div class="abs" style="left:955.0799999999999px;top:452.82px;width:31.6px;height:2.2px;background:#8cbcf0"></div>
<div class="abs" style="left:957.48px;top:454.12px;width:13.5px;height:1px;background:#5a6878"></div>
<svg style="left:956.0799999999999px;top:435.91999999999996px;" width="16.8" height="16.8" viewBox="0 0 16.8 16.8"><path d="M8.4 0 L16.8 16.8 L0 16.8Z" fill="#f7c300"/></svg>
<div class="t" style="left:960.88px;top:442.12px;font-size:10.6px;color:#151515;font-weight:normal;">1</div>
<div class="abs" style="left:988.5px;top:435.41999999999996px;width:32px;height:26.2px;border-radius:42% 42% 50% 50% / 58% 58% 42% 42%;background:radial-gradient(ellipse 60% 62% at 66% 46%,#cdd8f6 0%,#e2e8fa 40%,#f8faff 72%,#fff 100%)"></div>
<div class="abs" style="left:988.5px;top:452.82px;width:31.6px;height:2.2px;background:#8cbcf0"></div>
<div class="abs" style="left:990.9000000000001px;top:454.12px;width:13.5px;height:1px;background:#5a6878"></div>
<svg style="left:989.5px;top:435.91999999999996px;" width="16.8" height="16.8" viewBox="0 0 16.8 16.8"><path d="M8.4 0 L16.8 16.8 L0 16.8Z" fill="#f7c300"/></svg>
<div class="t" style="left:994.3000000000001px;top:442.12px;font-size:10.6px;color:#151515;font-weight:normal;">1</div>
<div class="abs" style="left:1021.92px;top:435.41999999999996px;width:32px;height:26.2px;border-radius:42% 42% 50% 50% / 58% 58% 42% 42%;background:radial-gradient(ellipse 60% 62% at 66% 46%,#cdd8f6 0%,#e2e8fa 40%,#f8faff 72%,#fff 100%)"></div>
<div class="abs" style="left:1021.92px;top:452.82px;width:31.6px;height:2.2px;background:#8cbcf0"></div>
<div class="abs" style="left:1024.32px;top:454.12px;width:13.5px;height:1px;background:#5a6878"></div>
<svg style="left:1022.92px;top:435.91999999999996px;" width="16.8" height="16.8" viewBox="0 0 16.8 16.8"><path d="M8.4 0 L16.8 16.8 L0 16.8Z" fill="#f7c300"/></svg>
<div class="t" style="left:1027.72px;top:442.12px;font-size:10.6px;color:#151515;font-weight:normal;">1</div>
<div class="t" style="left:640.1px;top:478.6px;font-size:11px;color:#222;font-weight:normal;transform:scaleX(0.9279);transform-origin:0 0;">Wells:</div>
<div class="abs" style="left:672.2px;top:477.1px;width:13.6px;height:12.9px;background:linear-gradient(#5a88f0,#2a5ad8);border:1px solid #7a9af0;box-shadow:inset 0 0 0 1px rgba(255,255,255,0.25)"></div>
<div class="t" style="left:674.8000000000001px;top:478.3px;font-size:11.2px;color:#fff;font-weight:bold;">U</div>
<div class="t" style="left:689.2px;top:478.6px;font-size:11px;color:#222;font-weight:bold;transform:scaleX(0.9562);transform-origin:0 0;">96</div>
<div class="t" style="left:705.6px;top:478.6px;font-size:11px;color:#222;font-weight:normal;transform:scaleX(0.9246);transform-origin:0 0;">Unknown</div>
<div class="abs" style="left:753.1px;top:477.1px;width:13.6px;height:12.9px;background:linear-gradient(#f88a50,#e85a20);border:1px solid #f8a878;box-shadow:inset 0 0 0 1px rgba(255,255,255,0.25)"></div>
<div class="t" style="left:755.7px;top:478.3px;font-size:11.2px;color:#fff;font-weight:bold;">S</div>
<div class="t" style="left:769.7px;top:478.6px;font-size:11px;color:#222;font-weight:bold;transform:scaleX(0.8990);transform-origin:0 0;">0</div>
<div class="t" style="left:779.9px;top:478.6px;font-size:11px;color:#222;font-weight:normal;transform:scaleX(0.9251);transform-origin:0 0;">Standard</div>
<div class="abs" style="left:825.7px;top:477.1px;width:13.6px;height:12.9px;background:linear-gradient(#d8d8d8,#a0a0a0);border:1px solid #c8c8c8;box-shadow:inset 0 0 0 1px rgba(255,255,255,0.25)"></div>
<div class="t" style="left:828.3000000000001px;top:478.3px;font-size:11.2px;color:#fff;font-weight:bold;">N</div>
<div class="t" style="left:842.3px;top:478.6px;font-size:11px;color:#222;font-weight:bold;transform:scaleX(0.9154);transform-origin:0 0;">0</div>
<div class="t" style="left:852.6px;top:478.6px;font-size:11px;color:#222;font-weight:normal;transform:scaleX(0.9264);transform-origin:0 0;">Negative Control</div>
<div class="t" style="left:1017.5px;top:478.6px;font-size:11px;color:#222;font-weight:bold;transform:scaleX(0.7356);transform-origin:0 0;">0</div>
<div class="t" style="left:1027.6px;top:478.6px;font-size:11px;color:#222;font-weight:normal;transform:scaleX(0.9014);transform-origin:0 0;">Empty</div>
<div class="t" style="left:180.5px;top:508.2px;font-size:11.2px;color:#222;font-weight:bold;transform:scaleX(0.8860);transform-origin:0 0;">Analysis Summary:</div>
<div class="t" style="left:292px;top:508.2px;font-size:11.2px;color:#222;font-weight:normal;transform:scaleX(0.9161);transform-origin:0 0;">Total Wells in Plate: 96</div>
<div class="t" style="left:414.9px;top:508.2px;font-size:11.2px;color:#222;font-weight:normal;transform:scaleX(0.9050);transform-origin:0 0;">Wells Set Up: 96</div>
<div class="t" style="left:509px;top:508.2px;font-size:11.2px;color:#222;font-weight:normal;transform:scaleX(0.9116);transform-origin:0 0;">Wells Omitted Manually: 0</div>
<div class="t" style="left:646.4px;top:508.2px;font-size:11.2px;color:#222;font-weight:normal;transform:scaleX(0.9134);transform-origin:0 0;">Wells Flagged: 96</div>
<div class="t" style="left:748px;top:508.2px;font-size:11.2px;color:#222;font-weight:normal;transform:scaleX(0.9086);transform-origin:0 0;">Wells Omitted by Analysis: 0</div>
<div class="t" style="left:895.2px;top:508.2px;font-size:11.2px;color:#222;font-weight:normal;transform:scaleX(0.9322);transform-origin:0 0;">Samples Used: 1</div>
<div class="t" style="left:994.6px;top:508.2px;font-size:11.2px;color:#222;font-weight:normal;transform:scaleX(0.9230);transform-origin:0 0;">Targets Used: 1</div>
<div class="abs" style="left:0px;top:529px;width:1075px;height:21px;background:#fff"></div>
<div class="abs" style="left:145.7px;top:527px;width:186px;height:19px;background:linear-gradient(#f4f4f8,#e4e4ec);border:1px solid #c0c0c8;border-top:none;box-shadow:1px 1px 1px #b0b0b8"></div>
<svg style="left:10px;top:532px;" width="13" height="12" viewBox="0 0 13 12"><path d="M6.5 0.5 L12.8 6.3 H11 V11.5 H7.8 V8 H5.2 V11.5 H2 V6.3 H0.2Z" fill="#111"/></svg>
<div class="t" style="left:26px;top:534px;font-size:10.4px;color:#888;font-weight:normal;">Home</div>
<div class="abs" style="left:60px;top:531px;width:1px;height:15px;background:#c8c8c8"></div>
<svg style="left:64.3px;top:533px;" width="12.5" height="11" viewBox="0 0 12.5 11"><rect x="0.5" y="0.5" width="11.5" height="10" fill="#f0f0ff" stroke="#8890b0" stroke-width="0.9"/><path d="M2.5 3V8.5H10" stroke="#606890" fill="none" stroke-width="0.7"/><path d="M3 7 L5 6 L7 7 L9 5" stroke="#d04060" fill="none" stroke-width="0.7"/><path d="M3 5.5 H10 M3 4H10" stroke="#b8a0c8" stroke-width="0.5"/></svg>
<div class="t" style="left:80.4px;top:534px;font-size:10.1px;color:#888;font-weight:normal;">Untitled 1</div>
<svg style="left:129.6px;top:535px;" width="6.5" height="6.5" viewBox="0 0 6.5 6.5"><path d="M0.5 0.5 L6 6 M6 0.5 L0.5 6" stroke="#777" stroke-width="1.1"/></svg>
<svg style="left:150.8px;top:533px;" width="12.5" height="11" viewBox="0 0 12.5 11"><rect x="0.5" y="0.5" width="11.5" height="10" fill="#f0f0ff" stroke="#8890b0" stroke-width="0.9"/><path d="M2.5 3V8.5H10" stroke="#606890" fill="none" stroke-width="0.7"/><path d="M3 7 L5 6 L7 7 L9 5" stroke="#d04060" fill="none" stroke-width="0.7"/><path d="M3 5.5 H10 M3 4H10" stroke="#b8a0c8" stroke-width="0.5"/></svg>
<div class="t" style="left:165.8px;top:534px;font-size:10px;color:#111;font-weight:bold;">202101-SYBR-t...0127(1)(1).eds</div>
<svg style="left:317.8px;top:535.5px;" width="6.5" height="6.5" viewBox="0 0 6.5 6.5"><path d="M0.5 0.5 L6 6 M6 0.5 L0.5 6" stroke="#888" stroke-width="1"/></svg>
<div class="abs" style="left:0px;top:549.7px;width:1075px;height:1.3px;background:#a8a8a8"></div>
<div class="abs" style="left:0px;top:551px;width:1075px;height:19px;background:#fff"></div>
<div class="abs" style="left:392px;top:554px;width:1.3px;height:16px;background:#b0b0b0"></div>
<div class="abs" style="left:394px;top:553px;width:481px;height:17px;background:#efefef;border-top:1px solid #a0a0a0;border-left:1px solid #a0a0a0"></div>
<div class="t" style="left:943.7px;top:556.5px;font-size:10.4px;color:#222;font-weight:normal;">Disconnected</div>
<div class="abs" style="left:874.2px;top:553.5px;width:1.6px;height:17px;background:#c4c4c4"></div>
</body></html>
